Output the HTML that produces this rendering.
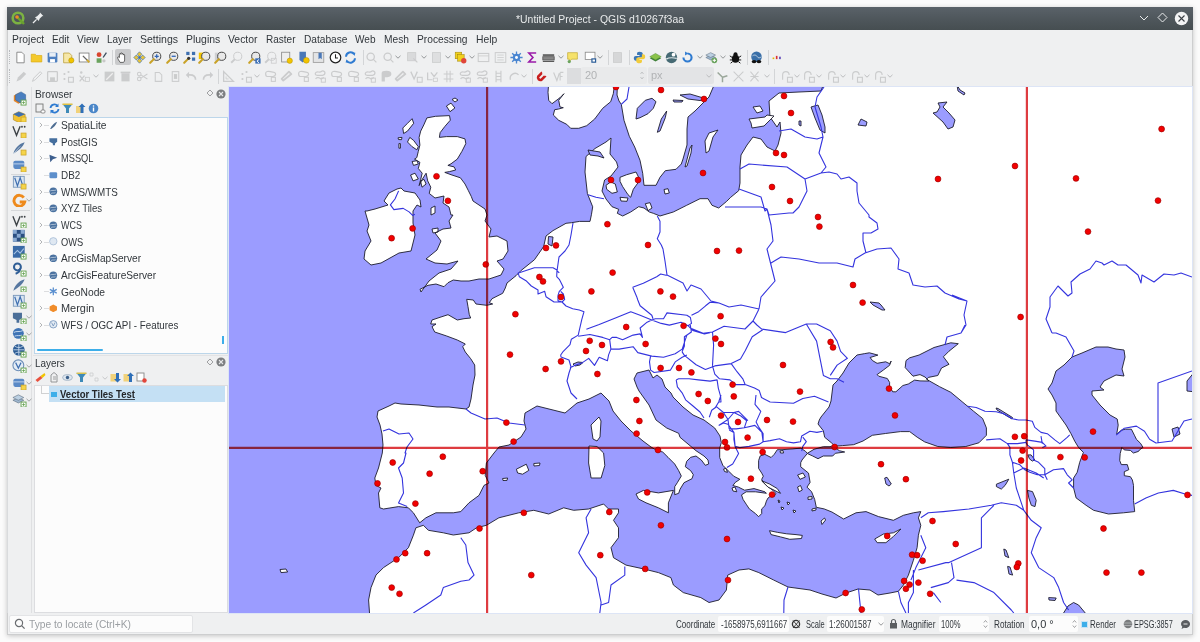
<!DOCTYPE html>
<html><head><meta charset="utf-8">
<style>
*{margin:0;padding:0;box-sizing:border-box}
html,body{width:1200px;height:642px;overflow:hidden;background:#fbfbfb;font-family:"Liberation Sans",sans-serif;color:#31363b}
.a{position:absolute}
.t{position:absolute;white-space:nowrap;line-height:1.15}
#win{position:absolute;left:7px;top:7px;width:1186px;height:627.5px;background:#eff0f1;border:1px solid #cdcecf;box-shadow:0 1px 5px rgba(0,0,0,.22)}
#title{position:absolute;left:7px;top:7px;width:1186px;height:22.5px;background:linear-gradient(#5a6269,#4f575c 50%,#464e51);color:#e9ebec;font-size:10.6px;text-align:center;line-height:22px}
.menu{position:absolute;top:32.5px;font-size:10.4px;color:#31363b;white-space:nowrap;line-height:1.15}
</style></head><body>
<div id="win"></div>
<div id="title"></div>
<svg class="a" style="left:11px;top:11px" width="15" height="15" viewBox="0 0 15 15"><circle cx="7" cy="7" r="5.3" fill="none" stroke="#7cb342" stroke-width="2.6"/><path d="M6 6l7 7" stroke="#6aa32e" stroke-width="2.4"/><circle cx="6" cy="6" r="1.8" fill="#f08a24"/></svg>
<svg class="a" style="left:32px;top:12px" width="12" height="12" viewBox="0 0 12 12"><path d="M1 11l3.6-3.6" stroke="#eceeef" stroke-width="1.3"/><path d="M3 5.2l3.8 3.8 0.8-2.2 2.8-2.8 0.6 0.2 0.3-0.3-3.3-3.3-0.3 0.3 0.2 0.6-2.8 2.8z" fill="#eceeef"/></svg>
<svg class="a" style="left:1139px;top:13px" width="10" height="10" viewBox="0 0 10 10"><path d="M1 3l4 4 4-4" fill="none" stroke="#e9ebec" stroke-width="1"/></svg>
<svg class="a" style="left:1157px;top:12px" width="11" height="11" viewBox="0 0 11 11"><path d="M5.5 1l4.5 4.5-4.5 4.5L1 5.5z" fill="none" stroke="#e9ebec" stroke-width="1"/></svg>
<svg class="a" style="left:1174px;top:11px" width="15" height="15" viewBox="0 0 15 15"><circle cx="7.5" cy="7.5" r="6.7" fill="#f2f3f4"/><path d="M4.5 4.5l6 6M10.5 4.5l-6 6" stroke="#3b4045" stroke-width="1.1"/></svg>
<div class="t" style="left:516.00px;top:14.98px;font-size:10.3px;line-height:1;color:#e9ebec;font-weight:normal;transform:scaleX(1.0120);transform-origin:0 0;">*Untitled Project - QGIS d10267f3aa</div>
<div class="t" style="left:11.50px;top:35.40px;font-size:10.4px;line-height:1;color:#31363b;font-weight:normal;transform:scaleX(0.9971);transform-origin:0 0;">Project</div>
<div class="t" style="left:51.75px;top:35.40px;font-size:10.4px;line-height:1;color:#31363b;font-weight:normal;transform:scaleX(0.9634);transform-origin:0 0;">Edit</div>
<div class="t" style="left:77.00px;top:35.40px;font-size:10.4px;line-height:1;color:#31363b;font-weight:normal;transform:scaleX(0.9846);transform-origin:0 0;">View</div>
<div class="t" style="left:107.00px;top:35.40px;font-size:10.4px;line-height:1;color:#31363b;font-weight:normal;transform:scaleX(0.9615);transform-origin:0 0;">Layer</div>
<div class="t" style="left:140.00px;top:35.40px;font-size:10.4px;line-height:1;color:#31363b;font-weight:normal;transform:scaleX(1.0121);transform-origin:0 0;">Settings</div>
<div class="t" style="left:185.75px;top:35.40px;font-size:10.4px;line-height:1;color:#31363b;font-weight:normal;transform:scaleX(1.0046);transform-origin:0 0;">Plugins</div>
<div class="t" style="left:228.00px;top:35.40px;font-size:10.4px;line-height:1;color:#31363b;font-weight:normal;transform:scaleX(1.0011);transform-origin:0 0;">Vector</div>
<div class="t" style="left:265.50px;top:35.40px;font-size:10.4px;line-height:1;color:#31363b;font-weight:normal;transform:scaleX(0.9638);transform-origin:0 0;">Raster</div>
<div class="t" style="left:303.50px;top:35.40px;font-size:10.4px;line-height:1;color:#31363b;font-weight:normal;transform:scaleX(0.9779);transform-origin:0 0;">Database</div>
<div class="t" style="left:355.00px;top:35.40px;font-size:10.4px;line-height:1;color:#31363b;font-weight:normal;transform:scaleX(0.9676);transform-origin:0 0;">Web</div>
<div class="t" style="left:383.75px;top:35.40px;font-size:10.4px;line-height:1;color:#31363b;font-weight:normal;transform:scaleX(0.9834);transform-origin:0 0;">Mesh</div>
<div class="t" style="left:417.00px;top:35.40px;font-size:10.4px;line-height:1;color:#31363b;font-weight:normal;transform:scaleX(0.9824);transform-origin:0 0;">Processing</div>
<div class="t" style="left:475.50px;top:35.40px;font-size:10.4px;line-height:1;color:#31363b;font-weight:normal;transform:scaleX(0.9942);transform-origin:0 0;">Help</div>
<div class="a" style="left:9px;top:50px;width:2px;height:14px;border-left:1px dotted #b9bbbe"></div>
<div class="a" style="left:9px;top:69px;width:2px;height:14px;border-left:1px dotted #b9bbbe"></div>
<svg class="a" style="left:13.5px;top:50.5px" width="13" height="13" viewBox="0 0 16 16"><path d="M3.5 1.5h6l3 3v10h-9z" fill="#fff" stroke="#777" stroke-width="1"/></svg>
<svg class="a" style="left:29.8px;top:50.5px" width="13" height="13" viewBox="0 0 16 16"><path d="M1.5 4h5l1.5 1.5h6.5v8h-13z" fill="#f4c92b" stroke="#d9a80f" stroke-width="0.8"/></svg>
<svg class="a" style="left:45.5px;top:50.5px" width="13" height="13" viewBox="0 0 16 16"><rect x="2" y="2" width="12" height="12" rx="1" fill="#4d7fc0"/><rect x="4" y="2.5" width="8" height="4.5" fill="#e8eef5"/><rect x="5" y="10" width="6" height="4" fill="#fff"/></svg>
<svg class="a" style="left:62.3px;top:50.5px" width="13" height="13" viewBox="0 0 16 16"><path d="M2 2.5h7l3 3v9H2z" fill="#f6e7a8" stroke="#b89a30" stroke-width="0.9"/><circle cx="11.5" cy="11.5" r="3.2" fill="#f2c400" stroke="#a88800" stroke-width="0.6"/></svg>
<svg class="a" style="left:78.2px;top:50.5px" width="13" height="13" viewBox="0 0 16 16"><rect x="1.5" y="2.5" width="12" height="11" fill="#fff" stroke="#777"/><path d="M6 6l6 6" stroke="#666" stroke-width="1.6"/><path d="M11 11l3 3" stroke="#d1a92a" stroke-width="2.2"/></svg>
<svg class="a" style="left:94.5px;top:50.5px" width="13" height="13" viewBox="0 0 16 16"><circle cx="5" cy="4.5" r="3" fill="#d9452f"/><rect x="2" y="9" width="6" height="5.5" fill="#6aa35e"/><path d="M10 8l4-6" stroke="#3a4b5c" stroke-width="1.6"/><circle cx="11" cy="12" r="2" fill="#c9c9c9"/></svg>
<div class="a" style="left:112px;top:50px;width:1px;height:15px;background:#d3d5d7"></div>
<div class="a" style="left:114.7px;top:49px;width:16px;height:15.5px;background:#c9cacc;border-radius:2px"></div>
<svg class="a" style="left:116px;top:50.5px" width="13" height="13" viewBox="0 0 16 16"><path d="M5 14c-1-2-3-4-3-6 0-1 1.5-1 2.2 0V4c0-1 1.6-1 1.6 0V3c0-1 1.6-1 1.6 0v1c0-1 1.6-1 1.6 0v1c0-1 1.6-1 1.6 0v6c0 2-1 3-2 3z" fill="#fff" stroke="#333" stroke-width="0.9"/></svg>
<svg class="a" style="left:132.5px;top:50.5px" width="13" height="13" viewBox="0 0 16 16"><path d="M8 1l3 3-3 3-3-3zM8 9l3 3-3 3-3-3zM4 5l3 3-3 3-3-3zM12 5l3 3-3 3-3-3z" fill="#e9c53a" stroke="#3d6fb0" stroke-width="0.8"/><rect x="6.5" y="6.5" width="3" height="3" fill="#3d6fb0"/></svg>
<svg class="a" style="left:149px;top:50.5px" width="13" height="13" viewBox="0 0 16 16"><circle cx="9.5" cy="6.5" r="5" fill="#e8e8e8" stroke="#444" stroke-width="1.2"/><path d="M6 10L1.5 14.5" stroke="#c9a227" stroke-width="2.6" stroke-linecap="round"/><path d="M7 6.5h5M9.5 4v5" stroke="#2f64b5" stroke-width="1.6"/></svg>
<svg class="a" style="left:165.5px;top:50.5px" width="13" height="13" viewBox="0 0 16 16"><circle cx="9.5" cy="6.5" r="5" fill="#e8e8e8" stroke="#444" stroke-width="1.2"/><path d="M6 10L1.5 14.5" stroke="#c9a227" stroke-width="2.6" stroke-linecap="round"/><path d="M7 6.5h5" stroke="#2f64b5" stroke-width="1.6"/></svg>
<svg class="a" style="left:182.5px;top:50.5px" width="13" height="13" viewBox="0 0 16 16"><rect x="4" y="1" width="4" height="4" fill="#3d6fb0"/><rect x="11" y="1" width="4" height="4" fill="#3d6fb0"/><rect x="11" y="8" width="4" height="4" fill="#3d6fb0"/><path d="M6 10L1.5 14.5" stroke="#c9a227" stroke-width="2.6" stroke-linecap="round"/><circle cx="7" cy="9" r="2" fill="#333"/></svg>
<svg class="a" style="left:197.5px;top:50.5px" width="13" height="13" viewBox="0 0 16 16"><rect x="1" y="2" width="7" height="8" fill="#f2c400"/><circle cx="9.5" cy="6.5" r="5" fill="#e8e8e8" stroke="#444" stroke-width="1.2"/><path d="M6 10L1.5 14.5" stroke="#c9a227" stroke-width="2.6" stroke-linecap="round"/></svg>
<svg class="a" style="left:214.3px;top:50.5px" width="13" height="13" viewBox="0 0 16 16"><rect x="1" y="2" width="6" height="10" fill="#cfd0d2"/><circle cx="9.5" cy="6.5" r="5" fill="#e8e8e8" stroke="#444" stroke-width="1.2"/><path d="M6 10L1.5 14.5" stroke="#c9a227" stroke-width="2.6" stroke-linecap="round"/></svg>
<svg class="a" style="left:230.2px;top:50.5px" width="13" height="13" viewBox="0 0 16 16"><circle cx="9.5" cy="6.5" r="5" fill="none" stroke="#cbcccd" stroke-width="1.2"/><path d="M6 10L1.5 14.5" stroke="#cbcccd" stroke-width="2.4"/></svg>
<svg class="a" style="left:247.5px;top:50.5px" width="13" height="13" viewBox="0 0 16 16"><circle cx="9.5" cy="6.5" r="5" fill="#e8e8e8" stroke="#444" stroke-width="1.2"/><path d="M6 10L1.5 14.5" stroke="#c9a227" stroke-width="2.6" stroke-linecap="round"/><rect x="9" y="9" width="6.5" height="6.5" fill="#3b6fb6"/><path d="M13.5 10.5l-2.5 2 2.5 2" stroke="#fff" fill="none" stroke-width="1.2"/></svg>
<svg class="a" style="left:263.5px;top:50.5px" width="13" height="13" viewBox="0 0 16 16"><circle cx="9.5" cy="6.5" r="5" fill="none" stroke="#cbcccd" stroke-width="1.2"/><path d="M6 10L1.5 14.5" stroke="#cbcccd" stroke-width="2.4"/><rect x="9" y="9" width="6" height="6" fill="none" stroke="#cbcccd"/></svg>
<svg class="a" style="left:280.2px;top:50.5px" width="13" height="13" viewBox="0 0 16 16"><rect x="2" y="1.5" width="10" height="12" fill="#eee" stroke="#888"/><circle cx="12" cy="12" r="3.3" fill="#f2c400" stroke="#b38f00" stroke-width="0.6"/></svg>
<svg class="a" style="left:296.8px;top:50.5px" width="13" height="13" viewBox="0 0 16 16"><path d="M3 1h8v10l-4 3-4-3z" fill="#4a78b8"/><circle cx="11.5" cy="11.5" r="3.6" fill="#f2c400" stroke="#b38f00" stroke-width="0.6"/></svg>
<svg class="a" style="left:311.8px;top:50.5px" width="13" height="13" viewBox="0 0 16 16"><rect x="1.5" y="2" width="13" height="12" fill="#e3e4e5" stroke="#999"/><path d="M8 2v8l2-1.5 2 1.5V2" fill="#4a78b8"/></svg>
<svg class="a" style="left:328.5px;top:50.5px" width="13" height="13" viewBox="0 0 16 16"><circle cx="8" cy="8" r="6.5" fill="#fff" stroke="#222" stroke-width="1.5"/><path d="M8 4v4.5h3" stroke="#222" stroke-width="1.3" fill="none"/></svg>
<svg class="a" style="left:344.3px;top:50.5px" width="13" height="13" viewBox="0 0 16 16"><path d="M2.5 7a5.5 5.5 0 0 1 10-3" stroke="#2f7bd1" stroke-width="2.4" fill="none"/><path d="M13.5 9a5.5 5.5 0 0 1-10 3" stroke="#2f7bd1" stroke-width="2.4" fill="none"/><path d="M10 1.5l4 0.5-1 4z" fill="#2f7bd1"/><path d="M6 14.5l-4-0.5 1-4z" fill="#2f7bd1"/></svg>
<div class="a" style="left:362.5px;top:50px;width:1px;height:15px;background:#d3d5d7"></div>
<svg class="a" style="left:365.2px;top:50.5px" width="13" height="13" viewBox="0 0 16 16"><circle cx="7" cy="7" r="4.5" fill="none" stroke="#cbcccd" stroke-width="1.6"/><path d="M10 10l4 4" stroke="#cbcccd" stroke-width="1.6"/></svg>
<svg class="a" style="left:381.8px;top:50.5px" width="13" height="13" viewBox="0 0 16 16"><circle cx="7" cy="7" r="4.5" fill="none" stroke="#cbcccd" stroke-width="1.6"/><path d="M10 10l4 4" stroke="#cbcccd" stroke-width="1.6"/></svg>
<svg class="a" style="left:395px;top:55px" width="6" height="4" viewBox="0 0 6 4"><path d="M0.5 0.8L3 3.2L5.5 0.8" fill="none" stroke="#8a8d90" stroke-width="0.9"/></svg>
<svg class="a" style="left:406px;top:50.5px" width="13" height="13" viewBox="0 0 16 16"><rect x="2" y="2" width="10" height="10" fill="#d9dadb" stroke="#cbcccd"/><path d="M9 9l5 5" stroke="#cbcccd" stroke-width="1.5"/></svg>
<svg class="a" style="left:421px;top:55px" width="6" height="4" viewBox="0 0 6 4"><path d="M0.5 0.8L3 3.2L5.5 0.8" fill="none" stroke="#8a8d90" stroke-width="0.9"/></svg>
<svg class="a" style="left:430.2px;top:50.5px" width="13" height="13" viewBox="0 0 16 16"><rect x="3" y="2" width="10" height="12" fill="#dedfe0" stroke="#cbcccd"/></svg>
<svg class="a" style="left:444.5px;top:55px" width="6" height="4" viewBox="0 0 6 4"><path d="M0.5 0.8L3 3.2L5.5 0.8" fill="none" stroke="#8a8d90" stroke-width="0.9"/></svg>
<svg class="a" style="left:453.5px;top:50.5px" width="13" height="13" viewBox="0 0 16 16"><rect x="1.5" y="1.5" width="8" height="8" fill="#f2d11c" stroke="#a48a10" stroke-width="0.7"/><rect x="4.5" y="4.5" width="8" height="8" fill="#f2d11c" stroke="#a48a10" stroke-width="0.7"/><circle cx="12" cy="12" r="3.3" fill="#e0463a"/></svg>
<svg class="a" style="left:468.7px;top:55px" width="6" height="4" viewBox="0 0 6 4"><path d="M0.5 0.8L3 3.2L5.5 0.8" fill="none" stroke="#8a8d90" stroke-width="0.9"/></svg>
<svg class="a" style="left:476.8px;top:50.5px" width="13" height="13" viewBox="0 0 16 16"><rect x="1.5" y="3" width="13" height="10" fill="none" stroke="#cbcccd" stroke-width="1.3"/><path d="M1.5 6h13" stroke="#cbcccd"/></svg>
<svg class="a" style="left:493.5px;top:50.5px" width="13" height="13" viewBox="0 0 16 16"><rect x="1.5" y="2" width="13" height="12" fill="none" stroke="#cbcccd" stroke-width="1.2"/><path d="M4 5h8M4 8h8M4 11h8" stroke="#cbcccd"/></svg>
<svg class="a" style="left:510.2px;top:50.5px" width="13" height="13" viewBox="0 0 16 16"><circle cx="8" cy="8" r="4.5" fill="#4a86d1"/><path d="M8 0.5v15M0.5 8h15M2.7 2.7l10.6 10.6M13.3 2.7L2.7 13.3" stroke="#4a86d1" stroke-width="1.6"/><circle cx="8" cy="8" r="1.8" fill="#fff"/></svg>
<svg class="a" style="left:526px;top:50.5px" width="13" height="13" viewBox="0 0 16 16"><path d="M12.5 2.5H3.5L8.5 8l-5 5.5h9" fill="none" stroke="#9a1aa8" stroke-width="2"/></svg>
<svg class="a" style="left:541.8px;top:50.5px" width="13" height="13" viewBox="0 0 16 16"><rect x="1" y="4" width="14" height="2" fill="#555"/><rect x="1" y="7" width="14" height="4" fill="#888" stroke="#555"/><rect x="1" y="12" width="14" height="1.5" fill="#555"/></svg>
<svg class="a" style="left:557.8px;top:55px" width="6" height="4" viewBox="0 0 6 4"><path d="M0.5 0.8L3 3.2L5.5 0.8" fill="none" stroke="#8a8d90" stroke-width="0.9"/></svg>
<svg class="a" style="left:566px;top:50.5px" width="13" height="13" viewBox="0 0 16 16"><path d="M2 2h12v8H7l-3 3v-3H2z" fill="#f6e26b" stroke="#c0a52c" stroke-width="0.8"/><circle cx="4" cy="13" r="2" fill="#6aa35e"/></svg>
<svg class="a" style="left:583.5px;top:50.5px" width="13" height="13" viewBox="0 0 16 16"><rect x="1.5" y="1.5" width="12" height="9" fill="#fff" stroke="#888"/><rect x="9" y="9" width="6" height="5.5" fill="#2d5f9a"/><rect x="10.5" y="10.5" width="3" height="2.5" fill="#fff"/></svg>
<svg class="a" style="left:597px;top:55px" width="6" height="4" viewBox="0 0 6 4"><path d="M0.5 0.8L3 3.2L5.5 0.8" fill="none" stroke="#8a8d90" stroke-width="0.9"/></svg>
<div class="a" style="left:607.5px;top:50px;width:1px;height:15px;background:#d3d5d7"></div>
<svg class="a" style="left:611px;top:50.5px" width="13" height="13" viewBox="0 0 16 16"><rect x="3" y="2" width="10" height="12" fill="#d6d7d8" stroke="#cbcccd"/></svg>
<div class="a" style="left:629px;top:50px;width:1px;height:15px;background:#d3d5d7"></div>
<svg class="a" style="left:632.5px;top:50.5px" width="13" height="13" viewBox="0 0 16 16"><path d="M8 1c-3 0-3 1.5-3 2.5V5h3v1H3.5C2 6 1 7 1 9s1 3 2.5 3H5v-2c0-1.2 1-2 2-2h3c1 0 2-1 2-2V3.5C12 2 10.5 1 8 1z" fill="#3b77b6"/><path d="M8 15c3 0 3-1.5 3-2.5V11H8v-1h4.5C14 10 15 9 15 7s-1-3-2.5-3H11v2c0 1.2-1 2-2 2H6c-1 0-2 1-2 2v2.5C4 14 5.5 15 8 15z" fill="#f2cc3d"/></svg>
<svg class="a" style="left:648.5px;top:50.5px" width="13" height="13" viewBox="0 0 16 16"><path d="M1 9l7 4 7-4-7-4z" fill="#3d7f3a"/><path d="M1 7l7 4 7-4-7-4z" fill="#8bc34a" stroke="#4d8b2d" stroke-width="0.6"/></svg>
<svg class="a" style="left:665.2px;top:50.5px" width="13" height="13" viewBox="0 0 16 16"><circle cx="8" cy="8" r="7" fill="#466a74"/><path d="M1.5 10c3-2 8-2 13-1" stroke="#dfe6e8" stroke-width="1.5" fill="none"/><circle cx="10.5" cy="4.5" r="2.3" fill="#fff"/></svg>
<svg class="a" style="left:681px;top:50.5px" width="13" height="13" viewBox="0 0 16 16"><path d="M3 8a5 5 0 1 0 5-5" fill="none" stroke="#2f7bd1" stroke-width="2.6"/><path d="M5 0.5l4 2.5-4 2.5z" fill="#2f7bd1"/></svg>
<svg class="a" style="left:696.6px;top:55px" width="6" height="4" viewBox="0 0 6 4"><path d="M0.5 0.8L3 3.2L5.5 0.8" fill="none" stroke="#8a8d90" stroke-width="0.9"/></svg>
<svg class="a" style="left:705.2px;top:50.5px" width="13" height="13" viewBox="0 0 16 16"><path d="M1 8l6 3 6-3-6-3z" fill="#9db6cf" stroke="#567" stroke-width="0.6"/><path d="M1 5l6 3 6-3-6-3z" fill="#bcd0e2" stroke="#567" stroke-width="0.6"/><circle cx="11.5" cy="11.5" r="3.5" fill="#6aa35e"/><path d="M9.5 11.5h4M11.5 9.5v4" stroke="#fff" stroke-width="1.2"/></svg>
<svg class="a" style="left:720.3px;top:55px" width="6" height="4" viewBox="0 0 6 4"><path d="M0.5 0.8L3 3.2L5.5 0.8" fill="none" stroke="#8a8d90" stroke-width="0.9"/></svg>
<svg class="a" style="left:728.5px;top:50.5px" width="13" height="13" viewBox="0 0 16 16"><ellipse cx="8" cy="9.5" rx="4.5" ry="5" fill="#111"/><circle cx="8" cy="4" r="2.5" fill="#111"/><path d="M1 6l3 2M15 6l-3 2M1 11h3M15 11h-3M2 15l2.5-2M14 15l-2.5-2" stroke="#111" stroke-width="1.2"/></svg>
<div class="a" style="left:746.7px;top:50px;width:1px;height:15px;background:#d3d5d7"></div>
<svg class="a" style="left:750.2px;top:50.5px" width="13" height="13" viewBox="0 0 16 16"><circle cx="8" cy="7" r="6.5" fill="#3a6fa8"/><path d="M3 6c2-2 5-1 6 1s3 2 5 0" stroke="#d0dde8" fill="none"/><ellipse cx="5" cy="13" rx="3" ry="2" fill="#111"/><ellipse cx="11" cy="13" rx="3" ry="2" fill="#111"/></svg>
<div class="a" style="left:768.3px;top:50px;width:1px;height:15px;background:#d3d5d7"></div>
<svg class="a" style="left:771px;top:50.5px" width="13" height="13" viewBox="0 0 16 16"><rect x="2" y="8" width="2" height="2" fill="#e2b400"/><rect x="6" y="6" width="2" height="4" fill="#d33"/><rect x="10" y="7" width="2" height="3" fill="#5a3fb5"/></svg>
<svg class="a" style="left:13.5px;top:69.5px" width="13" height="13" viewBox="0 0 16 16"><path d="M3 14l2-5 7-7 3 3-7 7z" fill="#cbcccd"/></svg>
<svg class="a" style="left:29.5px;top:69.5px" width="13" height="13" viewBox="0 0 16 16"><path d="M3 14l1.5-4 8-8 2 2-8 8z" fill="none" stroke="#cbcccd" stroke-width="1.2"/></svg>
<svg class="a" style="left:45.5px;top:69.5px" width="13" height="13" viewBox="0 0 16 16"><rect x="2" y="2" width="12" height="12" rx="1" fill="none" stroke="#cbcccd" stroke-width="1.6"/><rect x="5" y="9" width="6" height="5" fill="#cbcccd"/></svg>
<svg class="a" style="left:62.3px;top:69.5px" width="13" height="13" viewBox="0 0 16 16"><circle cx="3" cy="5" r="1.3" fill="#cbcccd"/><circle cx="8" cy="2.5" r="1.3" fill="#cbcccd"/><circle cx="3" cy="11" r="1.3" fill="#cbcccd"/><rect x="8" y="9" width="6" height="6" fill="none" stroke="#cbcccd" stroke-width="1.4"/></svg>
<svg class="a" style="left:78.2px;top:69.5px" width="13" height="13" viewBox="0 0 16 16"><circle cx="4" cy="3" r="1.5" fill="#cbcccd"/><path d="M2 7l6 7M8 7l-6 7" stroke="#cbcccd" stroke-width="1.6"/><rect x="9" y="9" width="5" height="5" fill="none" stroke="#cbcccd"/></svg>
<svg class="a" style="left:93px;top:74px" width="6" height="4" viewBox="0 0 6 4"><path d="M0.5 0.8L3 3.2L5.5 0.8" fill="none" stroke="#b5b7b9" stroke-width="0.9"/></svg>
<svg class="a" style="left:102.5px;top:69.5px" width="13" height="13" viewBox="0 0 16 16"><rect x="2" y="2" width="12" height="12" fill="#cbcccd"/><path d="M4 12l8-8" stroke="#eee" stroke-width="1.5"/></svg>
<svg class="a" style="left:118.5px;top:69.5px" width="13" height="13" viewBox="0 0 16 16"><rect x="3" y="4" width="10" height="10" fill="#cbcccd"/><rect x="2" y="2" width="12" height="2" fill="#cbcccd"/></svg>
<svg class="a" style="left:135.5px;top:69.5px" width="13" height="13" viewBox="0 0 16 16"><circle cx="4" cy="5" r="2.2" fill="none" stroke="#cbcccd" stroke-width="1.3"/><circle cx="4" cy="11" r="2.2" fill="none" stroke="#cbcccd" stroke-width="1.3"/><path d="M6 6l8 5M6 10l8-5" stroke="#cbcccd" stroke-width="1.3"/></svg>
<svg class="a" style="left:151.5px;top:69.5px" width="13" height="13" viewBox="0 0 16 16"><path d="M4 3h5l3 3v8H4z" fill="none" stroke="#cbcccd" stroke-width="1.3"/></svg>
<svg class="a" style="left:168.5px;top:69.5px" width="13" height="13" viewBox="0 0 16 16"><rect x="4" y="2" width="8" height="12" fill="none" stroke="#cbcccd" stroke-width="1.3"/><rect x="6" y="5" width="4" height="6" fill="#cbcccd"/></svg>
<svg class="a" style="left:184.5px;top:69.5px" width="13" height="13" viewBox="0 0 16 16"><path d="M13 12c0-4-3-6-7-6H3" fill="none" stroke="#cbcccd" stroke-width="2"/><path d="M5 2L1 6l4 4z" fill="#cbcccd"/></svg>
<svg class="a" style="left:200.5px;top:69.5px" width="13" height="13" viewBox="0 0 16 16"><path d="M3 12c0-4 3-6 7-6h3" fill="none" stroke="#cbcccd" stroke-width="2"/><path d="M11 2l4 4-4 4z" fill="#cbcccd"/></svg>
<div class="a" style="left:217.5px;top:69px;width:1px;height:15px;background:#d3d5d7"></div>
<svg class="a" style="left:221.5px;top:69.5px" width="13" height="13" viewBox="0 0 16 16"><path d="M2 2v12h12z" fill="none" stroke="#cbcccd" stroke-width="1.6"/><path d="M5 8v3h3" fill="none" stroke="#cbcccd"/></svg>
<svg class="a" style="left:239.5px;top:69.5px" width="13" height="13" viewBox="0 0 16 16"><circle cx="3" cy="5" r="1.3" fill="#cbcccd"/><circle cx="8" cy="2.5" r="1.3" fill="#cbcccd"/><circle cx="3" cy="11" r="1.3" fill="#cbcccd"/><rect x="8" y="9" width="6" height="6" fill="none" stroke="#cbcccd" stroke-width="1.4"/></svg>
<svg class="a" style="left:254px;top:74px" width="6" height="4" viewBox="0 0 6 4"><path d="M0.5 0.8L3 3.2L5.5 0.8" fill="none" stroke="#b5b7b9" stroke-width="0.9"/></svg>
<svg class="a" style="left:263.5px;top:69.5px" width="13" height="13" viewBox="0 0 16 16"><path d="M2 4c0-2 3-3 6-2s5 0 6 2-1 4-3 4H4C2 8 2 6 2 4z" fill="none" stroke="#cbcccd" stroke-width="1.5"/><rect x="9" y="9" width="5" height="5" fill="none" stroke="#cbcccd" stroke-width="1.3"/></svg>
<svg class="a" style="left:280.2px;top:69.5px" width="13" height="13" viewBox="0 0 16 16"><path d="M4 13l-2-2 9-9 3 3z" fill="none" stroke="#cbcccd" stroke-width="2.2" stroke-linejoin="round"/></svg>
<svg class="a" style="left:296.5px;top:69.5px" width="13" height="13" viewBox="0 0 16 16"><path d="M2 4c0-2 3-3 6-2s5 0 6 2-1 4-3 4H4C2 8 2 6 2 4z" fill="none" stroke="#cbcccd" stroke-width="1.5"/><rect x="9" y="9" width="5" height="5" fill="none" stroke="#cbcccd" stroke-width="1.3"/></svg>
<svg class="a" style="left:313.5px;top:69.5px" width="13" height="13" viewBox="0 0 16 16"><path d="M1.5 5c0-2 2-3 4-2.5s3 0 4-1 4 0 4 2-1 3-3 3H4c-2 0-2.5-1-2.5-1.5z" fill="none" stroke="#cbcccd" stroke-width="1.5"/><path d="M2 11c1-2 4-2 5-1s3 1 5-1" fill="none" stroke="#cbcccd" stroke-width="1.5"/><rect x="9" y="10" width="5" height="5" fill="none" stroke="#cbcccd" stroke-width="1.2"/></svg>
<svg class="a" style="left:330.2px;top:69.5px" width="13" height="13" viewBox="0 0 16 16"><path d="M2 4c0-2 3-3 6-2s5 0 6 2-1 4-3 4H4C2 8 2 6 2 4z" fill="none" stroke="#cbcccd" stroke-width="1.5"/><rect x="9" y="9" width="5" height="5" fill="none" stroke="#cbcccd" stroke-width="1.3"/></svg>
<svg class="a" style="left:346.5px;top:69.5px" width="13" height="13" viewBox="0 0 16 16"><path d="M2 4c0-2 3-3 6-2s5 0 6 2-1 4-3 4H4C2 8 2 6 2 4z" fill="none" stroke="#cbcccd" stroke-width="1.5"/><rect x="9" y="9" width="5" height="5" fill="none" stroke="#cbcccd" stroke-width="1.3"/></svg>
<svg class="a" style="left:363.5px;top:69.5px" width="13" height="13" viewBox="0 0 16 16"><path d="M1.5 5c0-2 2-3 4-2.5s3 0 4-1 4 0 4 2-1 3-3 3H4c-2 0-2.5-1-2.5-1.5z" fill="none" stroke="#cbcccd" stroke-width="1.5"/><path d="M2 11c1-2 4-2 5-1s3 1 5-1" fill="none" stroke="#cbcccd" stroke-width="1.5"/><rect x="9" y="10" width="5" height="5" fill="none" stroke="#cbcccd" stroke-width="1.2"/></svg>
<svg class="a" style="left:380.2px;top:69.5px" width="13" height="13" viewBox="0 0 16 16"><path d="M2 14V4c0-2 2-3 6-3s6 1 6 4-3 4-6 4H6v5z" fill="#cbcccd"/></svg>
<svg class="a" style="left:393.5px;top:69.5px" width="13" height="13" viewBox="0 0 16 16"><path d="M4 13l-2-2 9-9 3 3z" fill="none" stroke="#cbcccd" stroke-width="2.2" stroke-linejoin="round"/></svg>
<svg class="a" style="left:410.2px;top:69.5px" width="13" height="13" viewBox="0 0 16 16"><path d="M1 2l4 9 4-9" fill="none" stroke="#cbcccd" stroke-width="1.6"/><rect x="9" y="9" width="6" height="6" fill="none" stroke="#cbcccd" stroke-width="1.3"/></svg>
<svg class="a" style="left:426px;top:69.5px" width="13" height="13" viewBox="0 0 16 16"><path d="M2 3v9h6M6 3l4 5M14 3l-4 5" fill="none" stroke="#cbcccd" stroke-width="1.5"/><rect x="9" y="10" width="5" height="4" fill="none" stroke="#cbcccd"/></svg>
<svg class="a" style="left:441.5px;top:69.5px" width="13" height="13" viewBox="0 0 16 16"><path d="M6 1v14M10 1v14M2 5h12M2 11h12" stroke="#cbcccd" stroke-width="1.3"/></svg>
<svg class="a" style="left:458.5px;top:69.5px" width="13" height="13" viewBox="0 0 16 16"><path d="M1.5 5c0-2 2-3 4-2.5s3 0 4-1 4 0 4 2-1 3-3 3H4c-2 0-2.5-1-2.5-1.5z" fill="none" stroke="#cbcccd" stroke-width="1.5"/><path d="M2 11c1-2 4-2 5-1s3 1 5-1" fill="none" stroke="#cbcccd" stroke-width="1.5"/><rect x="9" y="10" width="5" height="5" fill="none" stroke="#cbcccd" stroke-width="1.2"/></svg>
<svg class="a" style="left:475.5px;top:69.5px" width="13" height="13" viewBox="0 0 16 16"><path d="M1.5 5c0-2 2-3 4-2.5s3 0 4-1 4 0 4 2-1 3-3 3H4c-2 0-2.5-1-2.5-1.5z" fill="none" stroke="#cbcccd" stroke-width="1.5"/><path d="M2 11c1-2 4-2 5-1s3 1 5-1" fill="none" stroke="#cbcccd" stroke-width="1.5"/><rect x="9" y="10" width="5" height="5" fill="none" stroke="#cbcccd" stroke-width="1.2"/></svg>
<svg class="a" style="left:491.5px;top:69.5px" width="13" height="13" viewBox="0 0 16 16"><path d="M5 1v14M11 1v14M5 4h6M5 8h6M5 12h6" stroke="#cbcccd" stroke-width="1.4"/></svg>
<svg class="a" style="left:507.5px;top:69.5px" width="13" height="13" viewBox="0 0 16 16"><path d="M3 12a6 6 0 0 1 10-6" fill="none" stroke="#cbcccd" stroke-width="1.6"/></svg>
<svg class="a" style="left:521px;top:74px" width="6" height="4" viewBox="0 0 6 4"><path d="M0.5 0.8L3 3.2L5.5 0.8" fill="none" stroke="#b5b7b9" stroke-width="0.9"/></svg>
<div class="a" style="left:531.6px;top:69px;width:1px;height:15px;background:#d3d5d7"></div>
<svg class="a" style="left:534.5px;top:69.5px" width="13" height="13" viewBox="0 0 16 16"><path d="M5 3a5 5 0 0 0 0 10h0" fill="none"/><path d="M9 3L4 8a3 3 0 0 0 4 4l5-5" fill="none" stroke="#c81e1e" stroke-width="3.2"/><path d="M9 3l4 4" stroke="#eee" stroke-width="2"/></svg>
<svg class="a" style="left:551.5px;top:69.5px" width="13" height="13" viewBox="0 0 16 16"><path d="M2 3l4 10 3-9M10 3v10M10 3h4M10 8h3" fill="none" stroke="#cbcccd" stroke-width="1.4"/></svg>
<div class="a" style="left:567px;top:68px;width:14px;height:16px;background:#dcdddf"></div>
<div class="a" style="left:581px;top:67px;width:66px;height:17px;background:#e9eaeb;border-radius:2px"></div>
<div class="t" style="left:585px;top:69px;font-size:11px;color:#b1b3b5">20</div>
<svg class="a" style="left:640px;top:71px" width="4" height="9" viewBox="0 0 4 9"><path d="M0.5 3L2 1 3.5 3M0.5 6L2 8 3.5 6" fill="none" stroke="#b9bbbd" stroke-width="0.8"/></svg>
<div class="a" style="left:648px;top:67px;width:66px;height:17px;background:#e3e4e6;border-radius:2px"></div>
<div class="t" style="left:651px;top:69px;font-size:11px;color:#b1b3b5">px</div>
<svg class="a" style="left:706px;top:74px" width="6" height="4" viewBox="0 0 6 4"><path d="M0.5 0.8L3 3.2L5.5 0.8" fill="none" stroke="#b5b7b9" stroke-width="0.9"/></svg>
<svg class="a" style="left:715.5px;top:69.5px" width="13" height="13" viewBox="0 0 16 16"><path d="M8 9L2 3M8 9l6-2M8 9v6" stroke="#9aa79a" stroke-width="1.8"/></svg>
<svg class="a" style="left:731.5px;top:69.5px" width="13" height="13" viewBox="0 0 16 16"><path d="M2 2l12 12M14 2L2 14" stroke="#cbcccd" stroke-width="1.3"/></svg>
<svg class="a" style="left:747.5px;top:69.5px" width="13" height="13" viewBox="0 0 16 16"><path d="M3 2l5 6-5 6M13 2L8 8l5 6M3 8h10" fill="none" stroke="#cbcccd" stroke-width="1.3"/></svg>
<svg class="a" style="left:764px;top:74px" width="6" height="4" viewBox="0 0 6 4"><path d="M0.5 0.8L3 3.2L5.5 0.8" fill="none" stroke="#b5b7b9" stroke-width="0.9"/></svg>
<div class="a" style="left:774px;top:69px;width:1px;height:15px;background:#d3d5d7"></div>
<svg class="a" style="left:780.5px;top:69.5px" width="13" height="13" viewBox="0 0 16 16"><path d="M2 12V6a4 4 0 0 1 8 0" fill="none" stroke="#cbcccd" stroke-width="1.4"/><rect x="8" y="9" width="6" height="6" fill="none" stroke="#cbcccd" stroke-width="1.4"/></svg>
<svg class="a" style="left:794px;top:74px" width="6" height="4" viewBox="0 0 6 4"><path d="M0.5 0.8L3 3.2L5.5 0.8" fill="none" stroke="#b5b7b9" stroke-width="0.9"/></svg>
<svg class="a" style="left:802.5px;top:69.5px" width="13" height="13" viewBox="0 0 16 16"><path d="M2 12V6a4 4 0 0 1 8 0" fill="none" stroke="#cbcccd" stroke-width="1.4"/><rect x="8" y="9" width="6" height="6" fill="none" stroke="#cbcccd" stroke-width="1.4"/></svg>
<svg class="a" style="left:816px;top:74px" width="6" height="4" viewBox="0 0 6 4"><path d="M0.5 0.8L3 3.2L5.5 0.8" fill="none" stroke="#b5b7b9" stroke-width="0.9"/></svg>
<svg class="a" style="left:826.5px;top:69.5px" width="13" height="13" viewBox="0 0 16 16"><path d="M2 12V6a4 4 0 0 1 8 0" fill="none" stroke="#cbcccd" stroke-width="1.4"/><rect x="8" y="9" width="6" height="6" fill="none" stroke="#cbcccd" stroke-width="1.4"/></svg>
<svg class="a" style="left:840px;top:74px" width="6" height="4" viewBox="0 0 6 4"><path d="M0.5 0.8L3 3.2L5.5 0.8" fill="none" stroke="#b5b7b9" stroke-width="0.9"/></svg>
<svg class="a" style="left:850.5px;top:69.5px" width="13" height="13" viewBox="0 0 16 16"><path d="M2 12V6a4 4 0 0 1 8 0" fill="none" stroke="#cbcccd" stroke-width="1.4"/><rect x="8" y="9" width="6" height="6" fill="none" stroke="#cbcccd" stroke-width="1.4"/></svg>
<svg class="a" style="left:864px;top:74px" width="6" height="4" viewBox="0 0 6 4"><path d="M0.5 0.8L3 3.2L5.5 0.8" fill="none" stroke="#b5b7b9" stroke-width="0.9"/></svg>
<svg class="a" style="left:873.5px;top:69.5px" width="13" height="13" viewBox="0 0 16 16"><path d="M2 12V6a4 4 0 0 1 8 0" fill="none" stroke="#cbcccd" stroke-width="1.4"/><rect x="8" y="9" width="6" height="6" fill="none" stroke="#cbcccd" stroke-width="1.4"/></svg>
<svg class="a" style="left:887px;top:74px" width="6" height="4" viewBox="0 0 6 4"><path d="M0.5 0.8L3 3.2L5.5 0.8" fill="none" stroke="#b5b7b9" stroke-width="0.9"/></svg>
<div class="a" style="left:7px;top:86px;width:1px;height:527px;background:#d9dbdd"></div>
<div class="a" style="left:31px;top:87px;width:1px;height:526px;background:#dfe0e2"></div>
<svg class="a" style="left:12.25px;top:91.45px" width="14.5" height="14.5" viewBox="0 0 16 16"><path d="M2 5l6-3 5 3v6l-6 3-5-3z" fill="#e6862a"/><path d="M4 4l6-3 5 3v6l-6 3-5-3z" fill="#4a7fc0" stroke="#2f5f95" stroke-width="0.6"/><rect x="10" y="10" width="5.5" height="5.5" fill="#fff" stroke="#5f9f4a" stroke-width="1"/><path d="M12.75 11.3v3M11.25 12.75h3" stroke="#5f9f4a" stroke-width="0.9"/></svg>
<svg class="a" style="left:12.25px;top:107.75px" width="14.5" height="14.5" viewBox="0 0 16 16"><path d="M1.5 7l6-3 7 3v6l-7 3-6-3z" fill="#f2c230" stroke="#a07a10" stroke-width="0.6"/><path d="M1.5 7l6-3 7 3-7 3z" fill="#3f6fb0"/><rect x="10" y="10" width="5.5" height="5.5" fill="#f5d44a" stroke="#c9a227" stroke-width="0.8"/></svg>
<svg class="a" style="left:12.25px;top:123.75px" width="14.5" height="14.5" viewBox="0 0 16 16"><path d="M1 2.5l4 10 4-10" fill="none" stroke="#3d4246" stroke-width="1.5"/><circle cx="11" cy="3" r="1" fill="#3d4246"/><circle cx="14" cy="3" r="1" fill="#3d4246"/><rect x="10" y="10" width="5.5" height="5.5" fill="#f5d44a" stroke="#c9a227" stroke-width="0.8"/></svg>
<svg class="a" style="left:12.25px;top:141.45px" width="14.5" height="14.5" viewBox="0 0 16 16"><path d="M1.5 14C3 8 8 3 14 1.5 12 7 7 11 1.5 14z" fill="#5677a0"/><path d="M1.5 14L9 6" stroke="#dfe6ee" stroke-width="0.7"/><rect x="10" y="10" width="5.5" height="5.5" fill="#f5d44a" stroke="#c9a227" stroke-width="0.8"/></svg>
<svg class="a" style="left:12.25px;top:157.75px" width="14.5" height="14.5" viewBox="0 0 16 16"><rect x="1.5" y="3" width="12" height="9" rx="2" fill="#5b8ac6"/><path d="M1.5 6.5h12" stroke="#c9daf0" stroke-width="1"/><rect x="10" y="10" width="5.5" height="5.5" fill="#f5d44a" stroke="#c9a227" stroke-width="0.8"/></svg>
<svg class="a" style="left:12.25px;top:175.25px" width="14.5" height="14.5" viewBox="0 0 16 16"><rect x="1.5" y="1.5" width="12" height="12" fill="#dbe6f2" stroke="#7a98bb" stroke-width="1"/><path d="M3 3l3 9 3-9 3 9" fill="none" stroke="#3f6fb0" stroke-width="1.3"/><rect x="10" y="10" width="5.5" height="5.5" fill="#f5d44a" stroke="#c9a227" stroke-width="0.8"/></svg>
<svg class="a" style="left:12.25px;top:192.75px" width="14.5" height="14.5" viewBox="0 0 16 16"><path d="M13 5a6 6 0 1 0 1 5H8.5" fill="none" stroke="#ee8a1c" stroke-width="3.2"/></svg>
<svg class="a" style="left:12.25px;top:213.75px" width="14.5" height="14.5" viewBox="0 0 16 16"><path d="M1 2.5l4 10 4-10" fill="none" stroke="#3d4246" stroke-width="1.5"/><circle cx="11" cy="3" r="1" fill="#3d4246"/><circle cx="14" cy="3" r="1" fill="#3d4246"/><rect x="10" y="10" width="5.5" height="5.5" fill="#fff" stroke="#5f9f4a" stroke-width="1"/><path d="M12.75 11.3v3M11.25 12.75h3" stroke="#5f9f4a" stroke-width="0.9"/></svg>
<svg class="a" style="left:12.25px;top:228.75px" width="14.5" height="14.5" viewBox="0 0 16 16"><rect x="1" y="1" width="13" height="13" fill="#2b4f82"/><rect x="1" y="1" width="4.3" height="4.3" fill="#89a9d2"/><rect x="9.6" y="1" width="4.3" height="4.3" fill="#89a9d2"/><rect x="5.3" y="5.3" width="4.3" height="4.3" fill="#89a9d2"/><rect x="1" y="9.6" width="4.3" height="4.3" fill="#89a9d2"/><rect x="10" y="10" width="5.5" height="5.5" fill="#fff" stroke="#5f9f4a" stroke-width="1"/><path d="M12.75 11.3v3M11.25 12.75h3" stroke="#5f9f4a" stroke-width="0.9"/></svg>
<svg class="a" style="left:12.25px;top:245.35px" width="14.5" height="14.5" viewBox="0 0 16 16"><rect x="1" y="1" width="13" height="13" fill="#3a6aa6"/><path d="M2 10l4-4 3 3 4-5" stroke="#a8c4e6" stroke-width="1.2" fill="none"/><rect x="10" y="10" width="5.5" height="5.5" fill="#fff" stroke="#5f9f4a" stroke-width="1"/><path d="M12.75 11.3v3M11.25 12.75h3" stroke="#5f9f4a" stroke-width="0.9"/></svg>
<svg class="a" style="left:12.25px;top:262.15px" width="14.5" height="14.5" viewBox="0 0 16 16"><circle cx="6" cy="5.5" r="3.8" fill="none" stroke="#2e5d95" stroke-width="2.2"/><path d="M9 7c0 3-2 5-5 6" stroke="#2e5d95" stroke-width="2.2" fill="none"/><rect x="10" y="10" width="5.5" height="5.5" fill="#fff" stroke="#5f9f4a" stroke-width="1"/><path d="M12.75 11.3v3M11.25 12.75h3" stroke="#5f9f4a" stroke-width="0.9"/></svg>
<svg class="a" style="left:12.25px;top:277.65px" width="14.5" height="14.5" viewBox="0 0 16 16"><path d="M1.5 14C3 8 8 3 14 1.5 12 7 7 11 1.5 14z" fill="#5677a0"/><rect x="10" y="10" width="5.5" height="5.5" fill="#fff" stroke="#5f9f4a" stroke-width="1"/><path d="M12.75 11.3v3M11.25 12.75h3" stroke="#5f9f4a" stroke-width="0.9"/></svg>
<svg class="a" style="left:12.25px;top:294.45px" width="14.5" height="14.5" viewBox="0 0 16 16"><rect x="1.5" y="1.5" width="12" height="12" fill="#dbe6f2" stroke="#7a98bb" stroke-width="1"/><path d="M3 3l3 9 3-9 3 9" fill="none" stroke="#3f6fb0" stroke-width="1.3"/><rect x="10" y="10" width="5.5" height="5.5" fill="#fff" stroke="#5f9f4a" stroke-width="1"/><path d="M12.75 11.3v3M11.25 12.75h3" stroke="#5f9f4a" stroke-width="0.9"/></svg>
<svg class="a" style="left:12.25px;top:309.75px" width="14.5" height="14.5" viewBox="0 0 16 16"><path d="M1 3h10v6l-3 2v3H5v-3L1 9z" fill="#4a6e98"/><rect x="10" y="10" width="5.5" height="5.5" fill="#fff" stroke="#5f9f4a" stroke-width="1"/><path d="M12.75 11.3v3M11.25 12.75h3" stroke="#5f9f4a" stroke-width="0.9"/></svg>
<svg class="a" style="left:12.25px;top:326.75px" width="14.5" height="14.5" viewBox="0 0 16 16"><circle cx="7" cy="7" r="6" fill="#3f74b5"/><path d="M2 6c3-2 6 0 10-2M3 10c3-1 5 0 8-1" stroke="#cfe0f2" stroke-width="1" fill="none"/><rect x="10" y="10" width="5.5" height="5.5" fill="#fff" stroke="#5f9f4a" stroke-width="1"/><path d="M12.75 11.3v3M11.25 12.75h3" stroke="#5f9f4a" stroke-width="0.9"/></svg>
<svg class="a" style="left:12.25px;top:343.45px" width="14.5" height="14.5" viewBox="0 0 16 16"><circle cx="7.5" cy="7.5" r="6.5" fill="#2e5d95"/><path d="M1.5 7.5h12M7.5 1v13M3 3.5c3 2 6 2 9 0M3 11.5c3-2 6-2 9 0" stroke="#cfe0f2" stroke-width="0.9" fill="none"/><rect x="10" y="10" width="5.5" height="5.5" fill="#fff" stroke="#5f9f4a" stroke-width="1"/><path d="M12.75 11.3v3M11.25 12.75h3" stroke="#5f9f4a" stroke-width="0.9"/></svg>
<svg class="a" style="left:12.25px;top:358.75px" width="14.5" height="14.5" viewBox="0 0 16 16"><circle cx="7" cy="7" r="6" fill="#e4ecf5" stroke="#6d8fb8" stroke-width="1.2"/><path d="M4 4l3 6 3-6" fill="none" stroke="#3f6fb0" stroke-width="1.3"/><rect x="10" y="10" width="5.5" height="5.5" fill="#fff" stroke="#5f9f4a" stroke-width="1"/><path d="M12.75 11.3v3M11.25 12.75h3" stroke="#5f9f4a" stroke-width="0.9"/></svg>
<svg class="a" style="left:12.25px;top:375.75px" width="14.5" height="14.5" viewBox="0 0 16 16"><rect x="1.5" y="3" width="12" height="9" rx="2" fill="#5b8ac6"/><path d="M1.5 6.5h12" stroke="#c9daf0" stroke-width="1"/><rect x="10" y="10" width="5.5" height="5.5" fill="#f5d44a" stroke="#c9a227" stroke-width="0.8"/></svg>
<svg class="a" style="left:12.25px;top:392.75px" width="14.5" height="14.5" viewBox="0 0 16 16"><path d="M1 8l6 3 6-3-6-3z" fill="#9db6cf" stroke="#567" stroke-width="0.6"/><path d="M1 5l6 3 6-3-6-3z" fill="#bcd0e2" stroke="#567" stroke-width="0.6"/><rect x="10" y="10" width="5.5" height="5.5" fill="#fff" stroke="#5f9f4a" stroke-width="1"/><path d="M12.75 11.3v3M11.25 12.75h3" stroke="#5f9f4a" stroke-width="0.9"/></svg>
<svg class="a" style="left:26px;top:198px" width="6" height="4" viewBox="0 0 6 4"><path d="M0.5 0.8L3 3.2L5.5 0.8" fill="none" stroke="#9a9c9e" stroke-width="0.9"/></svg>
<svg class="a" style="left:26px;top:315px" width="6" height="4" viewBox="0 0 6 4"><path d="M0.5 0.8L3 3.2L5.5 0.8" fill="none" stroke="#9a9c9e" stroke-width="0.9"/></svg>
<svg class="a" style="left:26px;top:332px" width="6" height="4" viewBox="0 0 6 4"><path d="M0.5 0.8L3 3.2L5.5 0.8" fill="none" stroke="#9a9c9e" stroke-width="0.9"/></svg>
<svg class="a" style="left:26px;top:364px" width="6" height="4" viewBox="0 0 6 4"><path d="M0.5 0.8L3 3.2L5.5 0.8" fill="none" stroke="#9a9c9e" stroke-width="0.9"/></svg>
<svg class="a" style="left:26px;top:381px" width="6" height="4" viewBox="0 0 6 4"><path d="M0.5 0.8L3 3.2L5.5 0.8" fill="none" stroke="#9a9c9e" stroke-width="0.9"/></svg>
<svg class="a" style="left:26px;top:398px" width="6" height="4" viewBox="0 0 6 4"><path d="M0.5 0.8L3 3.2L5.5 0.8" fill="none" stroke="#9a9c9e" stroke-width="0.9"/></svg>
<div class="a" style="left:11px;top:173.5px;width:19px;height:1px;background:#d6d8da"></div>
<div class="a" style="left:11px;top:210px;width:19px;height:1px;background:#d6d8da"></div>
<div class="t" style="left:35.40px;top:90.18px;font-size:10.3px;line-height:1;color:#31363b;font-weight:normal;transform:scaleX(0.9930);transform-origin:0 0;">Browser</div>
<svg class="a" style="left:206px;top:89px" width="8" height="8" viewBox="0 0 8 8"><path d="M4 1L7 4 4 7 1 4z" fill="none" stroke="#8a8c8e" stroke-width="0.8"/></svg>
<svg class="a" style="left:216px;top:89px" width="10" height="10" viewBox="0 0 10 10"><circle cx="5" cy="5" r="4.6" fill="#7d7f81"/><path d="M3 3l4 4M7 3L3 7" stroke="#e6e7e8" stroke-width="1.1"/></svg>
<svg class="a" style="left:34.9px;top:103.2px" width="11" height="11" viewBox="0 0 11 11"><rect x="1" y="1" width="7" height="8" fill="none" stroke="#777" stroke-width="0.9"/><rect x="6" y="7" width="4" height="3" rx="1" fill="#fff" stroke="#777" stroke-width="0.8"/></svg>
<svg class="a" style="left:48.7px;top:103.2px" width="11" height="11" viewBox="0 0 11 11"><path d="M1.5 5a4 4 0 0 1 7-2.2M9.5 6a4 4 0 0 1-7 2.2" fill="none" stroke="#2f7bd1" stroke-width="1.8"/><path d="M9.5 0.5v3.5H6z M1.5 10.5V7H5z" fill="#2f7bd1"/></svg>
<svg class="a" style="left:61.5px;top:103.2px" width="11" height="11" viewBox="0 0 11 11"><path d="M0.5 1h10L7 5.5V10H4V5.5z" fill="#3d8ab8"/><rect x="0.5" y="0.5" width="10" height="1.5" fill="#e0c040"/></svg>
<svg class="a" style="left:75.3px;top:103.2px" width="11" height="11" viewBox="0 0 11 11"><rect x="1" y="3" width="6" height="7" fill="#f1d27a"/><path d="M7 0.5l3.5 3.5H8.5v6h-3V4H3.5z" fill="#2f6fb8"/></svg>
<svg class="a" style="left:88.2px;top:103.2px" width="11" height="11" viewBox="0 0 11 11"><circle cx="5.5" cy="5.5" r="4.8" fill="#4a86c8"/><rect x="4.8" y="4.5" width="1.4" height="4" fill="#fff"/><circle cx="5.5" cy="3" r="0.8" fill="#fff"/></svg>
<div class="a" style="left:33.5px;top:116.5px;width:194px;height:237.5px;background:#fcfcfc;border:1px solid #bcd6ea"></div>
<svg class="a" style="left:39px;top:122.15px" width="4" height="6" viewBox="0 0 4 6"><path d="M0.8 0.8L3 3 0.8 5.2" fill="none" stroke="#a0a2a4" stroke-width="0.8"/></svg>
<div class="a" style="left:43.7px;top:125.15px;width:5px;height:1px;background:#dcdddf"></div>
<svg class="a" style="left:49.2px;top:120.85px" width="8.6" height="8.6" viewBox="0 0 10 10"><path d="M1 10C2.5 6 6 2 9.5 1 8 5 5 8.5 1 10z" fill="#4d6d92"/></svg>
<div class="t" style="left:60.50px;top:121.23px;font-size:10.3px;line-height:1;color:#31363b;font-weight:normal;transform:scaleX(0.9932);transform-origin:0 0;">SpatiaLite</div>
<svg class="a" style="left:39px;top:138.78px" width="4" height="6" viewBox="0 0 4 6"><path d="M0.8 0.8L3 3 0.8 5.2" fill="none" stroke="#a0a2a4" stroke-width="0.8"/></svg>
<div class="a" style="left:43.7px;top:141.78px;width:5px;height:1px;background:#dcdddf"></div>
<svg class="a" style="left:49.2px;top:137.48px" width="8.6" height="8.6" viewBox="0 0 10 10"><path d="M0.5 1.5h9v4l-2.5 2v2H4.5V7.5L0.5 5.5z" fill="#466f9e"/></svg>
<div class="t" style="left:60.50px;top:137.86px;font-size:10.3px;line-height:1;color:#31363b;font-weight:normal;transform:scaleX(0.9493);transform-origin:0 0;">PostGIS</div>
<svg class="a" style="left:39px;top:155.41px" width="4" height="6" viewBox="0 0 4 6"><path d="M0.8 0.8L3 3 0.8 5.2" fill="none" stroke="#a0a2a4" stroke-width="0.8"/></svg>
<div class="a" style="left:43.7px;top:158.41px;width:5px;height:1px;background:#dcdddf"></div>
<svg class="a" style="left:49.2px;top:154.11px" width="8.6" height="8.6" viewBox="0 0 10 10"><path d="M0.5 1l9 3.5-5 1.5-3 3.5z" fill="#3d5f8e"/></svg>
<div class="t" style="left:60.50px;top:154.49px;font-size:10.3px;line-height:1;color:#31363b;font-weight:normal;transform:scaleX(0.9012);transform-origin:0 0;">MSSQL</div>
<div class="a" style="left:43.7px;top:175.04px;width:5px;height:1px;background:#dcdddf"></div>
<svg class="a" style="left:49.2px;top:170.74px" width="8.6" height="8.6" viewBox="0 0 10 10"><rect x="0.5" y="1.5" width="9" height="7" rx="1.5" fill="#5d8fcb"/></svg>
<div class="t" style="left:60.50px;top:171.12px;font-size:10.3px;line-height:1;color:#31363b;font-weight:normal;transform:scaleX(0.9585);transform-origin:0 0;">DB2</div>
<svg class="a" style="left:39px;top:188.67px" width="4" height="6" viewBox="0 0 4 6"><path d="M0.8 0.8L3 3 0.8 5.2" fill="none" stroke="#a0a2a4" stroke-width="0.8"/></svg>
<div class="a" style="left:43.7px;top:191.67px;width:5px;height:1px;background:#dcdddf"></div>
<svg class="a" style="left:49.2px;top:187.37px" width="8.6" height="8.6" viewBox="0 0 10 10"><circle cx="5" cy="5" r="4.5" fill="#4b72a0"/><path d="M1.5 4.5c2-1 4 0 7-1M2.5 7.5c2-1 3.5 0 5-1" stroke="#e8eef5" stroke-width="0.7" fill="none"/></svg>
<div class="t" style="left:60.50px;top:187.75px;font-size:10.3px;line-height:1;color:#31363b;font-weight:normal;transform:scaleX(0.9566);transform-origin:0 0;">WMS/WMTS</div>
<svg class="a" style="left:39px;top:205.3px" width="4" height="6" viewBox="0 0 4 6"><path d="M0.8 0.8L3 3 0.8 5.2" fill="none" stroke="#a0a2a4" stroke-width="0.8"/></svg>
<div class="a" style="left:43.7px;top:208.30px;width:5px;height:1px;background:#dcdddf"></div>
<svg class="a" style="left:49.2px;top:204px" width="8.6" height="8.6" viewBox="0 0 10 10"><circle cx="5" cy="5" r="4.5" fill="#4b72a0"/><path d="M1.5 4.5c2-1 4 0 7-1M2.5 7.5c2-1 3.5 0 5-1" stroke="#e8eef5" stroke-width="0.7" fill="none"/></svg>
<div class="t" style="left:60.50px;top:204.38px;font-size:10.3px;line-height:1;color:#31363b;font-weight:normal;transform:scaleX(0.9328);transform-origin:0 0;">XYZ Tiles</div>
<svg class="a" style="left:39px;top:221.93px" width="4" height="6" viewBox="0 0 4 6"><path d="M0.8 0.8L3 3 0.8 5.2" fill="none" stroke="#a0a2a4" stroke-width="0.8"/></svg>
<div class="a" style="left:43.7px;top:224.93px;width:5px;height:1px;background:#dcdddf"></div>
<svg class="a" style="left:49.2px;top:220.63px" width="8.6" height="8.6" viewBox="0 0 10 10"><circle cx="5" cy="5" r="4.5" fill="#4b72a0"/><path d="M1.5 4.5c2-1 4 0 7-1M2.5 7.5c2-1 3.5 0 5-1" stroke="#e8eef5" stroke-width="0.7" fill="none"/></svg>
<div class="t" style="left:60.50px;top:221.01px;font-size:10.3px;line-height:1;color:#31363b;font-weight:normal;transform:scaleX(0.8697);transform-origin:0 0;">WCS</div>
<svg class="a" style="left:39px;top:238.56px" width="4" height="6" viewBox="0 0 4 6"><path d="M0.8 0.8L3 3 0.8 5.2" fill="none" stroke="#a0a2a4" stroke-width="0.8"/></svg>
<div class="a" style="left:43.7px;top:241.56px;width:5px;height:1px;background:#dcdddf"></div>
<svg class="a" style="left:49.2px;top:237.26px" width="8.6" height="8.6" viewBox="0 0 10 10"><circle cx="5" cy="5" r="4.3" fill="#dfe8f2" stroke="#9db5d0" stroke-width="0.8"/></svg>
<div class="t" style="left:60.50px;top:237.64px;font-size:10.3px;line-height:1;color:#31363b;font-weight:normal;transform:scaleX(0.9021);transform-origin:0 0;">OWS</div>
<svg class="a" style="left:39px;top:255.19px" width="4" height="6" viewBox="0 0 4 6"><path d="M0.8 0.8L3 3 0.8 5.2" fill="none" stroke="#a0a2a4" stroke-width="0.8"/></svg>
<div class="a" style="left:43.7px;top:258.19px;width:5px;height:1px;background:#dcdddf"></div>
<svg class="a" style="left:49.2px;top:253.89px" width="8.6" height="8.6" viewBox="0 0 10 10"><circle cx="5" cy="5" r="4.5" fill="#4b72a0"/><path d="M1.5 4.5c2-1 4 0 7-1M2.5 7.5c2-1 3.5 0 5-1" stroke="#e8eef5" stroke-width="0.7" fill="none"/></svg>
<div class="t" style="left:60.50px;top:254.27px;font-size:10.3px;line-height:1;color:#31363b;font-weight:normal;transform:scaleX(0.9858);transform-origin:0 0;">ArcGisMapServer</div>
<svg class="a" style="left:39px;top:271.82px" width="4" height="6" viewBox="0 0 4 6"><path d="M0.8 0.8L3 3 0.8 5.2" fill="none" stroke="#a0a2a4" stroke-width="0.8"/></svg>
<div class="a" style="left:43.7px;top:274.82px;width:5px;height:1px;background:#dcdddf"></div>
<svg class="a" style="left:49.2px;top:270.52px" width="8.6" height="8.6" viewBox="0 0 10 10"><circle cx="5" cy="5" r="4.5" fill="#4b72a0"/><path d="M1.5 4.5c2-1 4 0 7-1M2.5 7.5c2-1 3.5 0 5-1" stroke="#e8eef5" stroke-width="0.7" fill="none"/></svg>
<div class="t" style="left:60.50px;top:270.90px;font-size:10.3px;line-height:1;color:#31363b;font-weight:normal;transform:scaleX(0.9833);transform-origin:0 0;">ArcGisFeatureServer</div>
<div class="a" style="left:43.7px;top:291.45px;width:5px;height:1px;background:#dcdddf"></div>
<svg class="a" style="left:49.2px;top:287.15px" width="8.6" height="8.6" viewBox="0 0 10 10"><path d="M5 0.5v9M1 2.8l8 4.4M9 2.8L1 7.2" stroke="#5a8fcf" stroke-width="1.5"/></svg>
<div class="t" style="left:60.50px;top:287.53px;font-size:10.3px;line-height:1;color:#31363b;font-weight:normal;transform:scaleX(1.0001);transform-origin:0 0;">GeoNode</div>
<svg class="a" style="left:39px;top:305.08px" width="4" height="6" viewBox="0 0 4 6"><path d="M0.8 0.8L3 3 0.8 5.2" fill="none" stroke="#a0a2a4" stroke-width="0.8"/></svg>
<div class="a" style="left:43.7px;top:308.08px;width:5px;height:1px;background:#dcdddf"></div>
<svg class="a" style="left:49.2px;top:303.78px" width="8.6" height="8.6" viewBox="0 0 10 10"><path d="M5 0.5l4.3 2.3v4.6L5 9.5 0.7 7.4V2.8z" fill="#f08c2a"/></svg>
<div class="t" style="left:60.50px;top:304.16px;font-size:10.3px;line-height:1;color:#31363b;font-weight:normal;transform:scaleX(1.0608);transform-origin:0 0;">Mergin</div>
<svg class="a" style="left:39px;top:321.71px" width="4" height="6" viewBox="0 0 4 6"><path d="M0.8 0.8L3 3 0.8 5.2" fill="none" stroke="#a0a2a4" stroke-width="0.8"/></svg>
<div class="a" style="left:43.7px;top:324.71px;width:5px;height:1px;background:#dcdddf"></div>
<svg class="a" style="left:49.2px;top:320.41px" width="8.6" height="8.6" viewBox="0 0 10 10"><circle cx="5" cy="5" r="4.3" fill="#e4ecf4" stroke="#6d8fb8" stroke-width="0.9"/><path d="M3 3l2 4 2-4" fill="none" stroke="#6d8fb8" stroke-width="0.9"/></svg>
<div class="t" style="left:60.50px;top:320.79px;font-size:10.3px;line-height:1;color:#31363b;font-weight:normal;transform:scaleX(0.9499);transform-origin:0 0;">WFS / OGC API - Features</div>
<div class="a" style="left:37px;top:348.5px;width:66px;height:2px;background:#3daee9;border-radius:1px"></div>
<div class="a" style="left:222px;top:336px;width:2px;height:8px;background:#3daee9"></div>
<div class="a" style="left:33px;top:355px;width:195px;height:1px;background:#e2e3e5"></div>
<div class="t" style="left:35.20px;top:358.98px;font-size:10.3px;line-height:1;color:#31363b;font-weight:normal;transform:scaleX(0.9642);transform-origin:0 0;">Layers</div>
<svg class="a" style="left:206px;top:358px" width="8" height="8" viewBox="0 0 8 8"><path d="M4 1L7 4 4 7 1 4z" fill="none" stroke="#8a8c8e" stroke-width="0.8"/></svg>
<svg class="a" style="left:216px;top:357px" width="10" height="10" viewBox="0 0 10 10"><circle cx="5" cy="5" r="4.6" fill="#7d7f81"/><path d="M3 3l4 4M7 3L3 7" stroke="#e6e7e8" stroke-width="1.1"/></svg>
<svg class="a" style="left:35px;top:372px" width="11" height="11" viewBox="0 0 11 11"><path d="M0.5 8l5-4 2 2-5 4z" fill="#e8503e"/><path d="M5.5 4l4-3 1 2-3 3z" fill="#f2c400"/></svg>
<svg class="a" style="left:48.5px;top:372px" width="11" height="11" viewBox="0 0 11 11"><path d="M2 10V3l3-2.5L8 3v7z" fill="none" stroke="#8a8c8e" stroke-width="0.9"/><path d="M4 5h3M4 7h3" stroke="#8a8c8e" stroke-width="0.8"/></svg>
<svg class="a" style="left:62px;top:372px" width="11" height="11" viewBox="0 0 11 11"><ellipse cx="5.5" cy="5.5" rx="4.8" ry="2.8" fill="#dfe7ef" stroke="#8aa0b8" stroke-width="0.7"/><circle cx="5.5" cy="5.5" r="1.7" fill="#3a5f8a"/></svg>
<svg class="a" style="left:75.5px;top:372px" width="11" height="11" viewBox="0 0 11 11"><path d="M0.5 1h10L7 5.5V10H4V5.5z" fill="#3d8ab8"/><rect x="0.5" y="0.5" width="10" height="1.5" fill="#d8c050"/></svg>
<svg class="a" style="left:89px;top:372px" width="11" height="11" viewBox="0 0 11 11"><path d="M1 1h3v3H1zM6 6h3v3H6z" fill="none" stroke="#cfd0d2" stroke-width="0.9"/></svg>
<svg class="a" style="left:101.5px;top:375.5px" width="6" height="4" viewBox="0 0 6 4"><path d="M0.5 0.8L3 3.2L5.5 0.8" fill="none" stroke="#c0c2c4" stroke-width="0.9"/></svg>
<svg class="a" style="left:109.5px;top:372px" width="11" height="11" viewBox="0 0 11 11"><rect x="0.5" y="2" width="6" height="7.5" fill="#f1d27a"/><path d="M7.5 10.5L4 7h2V1h3v6h2z" fill="#2f6fb8"/></svg>
<svg class="a" style="left:123px;top:372px" width="11" height="11" viewBox="0 0 11 11"><rect x="0.5" y="2" width="6" height="7.5" fill="#f1d27a"/><path d="M7.5 0.5L11 4H9v6H6V4H4z" fill="#2f6fb8"/></svg>
<svg class="a" style="left:136px;top:372px" width="11" height="11" viewBox="0 0 11 11"><rect x="1" y="1" width="7" height="8" fill="#fff" stroke="#888" stroke-width="0.9"/><circle cx="8.5" cy="8.5" r="2.2" fill="#e2453a"/></svg>
<div class="a" style="left:33.5px;top:385px;width:194px;height:228px;background:#fcfcfc;border:1px solid #dcdde0"></div>
<div class="a" style="left:49px;top:385.5px;width:176px;height:16px;background:#c4e0f4"></div>
<div class="a" style="left:41px;top:386px;width:1px;height:7px;background:#d0d1d2"></div><div class="a" style="left:41px;top:393px;width:8px;height:1px;background:#d0d1d2"></div>
<div class="a" style="left:51px;top:391.5px;width:5.5px;height:5.5px;background:#3daee9"></div>
<div class="t" style="left:60.00px;top:389.23px;font-size:10.6px;line-height:1;color:#232629;font-weight:bold;transform:scaleX(0.9012);transform-origin:0 0;">Vector Tiles Test</div>
<div class="a" style="left:60px;top:398.6px;width:75px;height:1px;background:#3b4550"></div>
<div class="a" style="left:228px;top:86px;width:965px;height:528px;border:1px solid #dde5f6"></div>
<svg class="a" style="left:229px;top:87px" width="963" height="526" viewBox="229 87 963 526"><rect x="229" y="87" width="963" height="526" fill="#fff"/>
<path d="M225,83 548.7,83 548,92.3 548.7,100.3 552,103.7 560,97.7 564,93.7 558.7,100.3 560,107 563.3,107.7 558.7,109 554.7,109.7 553.3,115 558.7,120.3 566.7,124.3 570.7,128.3 578.7,128.3 586.7,125.7 594.7,119 602.7,108.3 610.7,101.7 613.3,93.7 614.7,83 617.5,83 617,95 619,101 621.3,104.3 624,120.3 629.3,136.3 634.7,147 640,160.3 642.7,173.3 644,185.3 656,185.3 660,177.3 665.3,170.7 676,169.3 681.3,164 683,159 687,145 687,129 688,117 695,111 709,97 715,83 824,83 821,91 799,92 779,93 769,101 770,117 777,127 780,122 781,133 778,145 775,151 767,147 761,139 753,137 747,145 741,155 740,167 740,183 738.7,190.7 730.7,197.3 726.7,201.3 718.7,208 712,205.3 708,198.7 700,198.7 686.7,205.3 673.3,212 660,216 653.3,213.3 649.3,212 644,208 638.7,206.7 630.7,212 622.7,216 617.3,213.3 618.7,209.3 612,206.7 606,199 602,191 604.6,180 611,176 618,167 616.5,162 610,154 611,138 606,142 595,148.5 586,156.5 585,172 587.4,193.6 592.7,206.8 591.4,214.8 590,221.4 579.5,221.4 571.5,222.7 566,223.3 553,230.6 546,236 543.7,246.5 534.4,259.8 521.2,270.4 516,275.7 507,283 505.3,288 502.7,293.3 492,298.7 489.3,302.7 492.7,304 486.7,305.3 476,304 473.3,300 466.7,299.3 468,306.7 469.3,314.7 470.7,318 464,318.7 457.3,320 448,314.7 440,317.3 432,320 430.7,324 436,324 432,326.7 434.7,332 446.7,336 457.3,340 465.3,344 462.7,346.7 465.3,352 470.7,358.7 474.7,365 475,375 473,385 471,399 469,407 466,409 449,407 437,407 419,405 401,404 395,403 389,406 378,411 377,417 380,425 382,434 383,445 382.3,453 378.5,468 374.8,478 376,485.4 381,488 378.5,493 379.8,507.8 383.5,509 398.5,506.6 408.4,507.8 413.4,512.8 419.7,522.8 425.9,517.8 435.9,512.8 453.3,512.8 460.8,511.6 469,502.8 479,495.4 484,485.4 489,483 485.2,475.4 486.4,463 494,453 499,447 509,445 521,437 526,429 524,421 525,413 537,406 549,409 565,413 577,403 589,399 601,393 609,401 613,411 621,421 631,431 643,441 651,447 657.3,450.7 662.7,452 668,457.3 674.7,464 678.7,470.7 681.3,476 677.3,482.7 674.7,486.7 674.7,494.7 678.7,493.3 680,489.3 684,482.7 692,478.7 693.3,474.7 690.7,470.7 685.3,466.7 686.7,461.3 690.7,457.3 696,456 701.3,460 705.3,465.3 708.7,464 708,460 704,456 696,450.7 688,444 680,437.3 678.7,433.3 666.7,428 656,420 649,405 639,391 637,387 634,379 637,373 649,370 653,378 657,375 662,379 665,387 671,393 673,397 683,407 693,415 704,420 714.7,428 720,436 721.3,442.7 719.7,448.1 719.7,457.5 722.8,465.3 729,471.5 733.7,476.2 739.9,479.3 735.3,482.4 732.9,485.5 738.4,487.1 744.6,490.2 754,488.6 764.9,491.8 766.4,493.3 755.5,491.8 746.2,491.8 741.5,494.9 743.1,499.5 746.2,504.2 749.3,508.9 755.5,513.6 758.6,516.7 761.7,513.6 761.7,508.9 764.9,505.8 766.4,501.1 768,498 770.3,496.4 774.2,496.4 775.8,493.3 772.7,490.2 766.4,485.5 763.3,482.4 761.7,479.3 763.3,476.2 761.7,473.1 758.6,468.4 758.6,460.6 760.2,455.9 764.9,454.4 771.1,457.5 774.2,454.4 777.3,449.7 782,449.7 792.9,448.9 800.7,448.1 805.4,451.2 807.3,453.3 814,449.3 823.3,446.7 830,446.7 834,445.3 834,445.3 831.3,442.7 824.7,437.3 823.3,430.7 818,424 819.3,420 821,417 829,407 831,401 833,385 837,381 843,373 849,363 857,355 864.7,353.6 869.4,352.8 877.9,355.1 870.1,357.5 872.5,360.6 877.1,363.3 885.7,361.8 889.6,363.7 891.2,361 889.6,365.3 883.4,370 877.1,374.6 878.7,376.2 887.3,378.5 889.6,382.4 889.6,386.3 892.7,391.8 895.9,391.8 902.9,385.5 908.3,384 914.6,380.1 920,380.9 925,381 929,381 925,377 920,374.6 913,376.2 905.2,367.6 906,360.6 909.7,357.8 919.1,355 934,347.5 950.8,342.8 958.3,343.7 949,351.2 943.4,356.8 949,364.3 941.5,368 937.8,375.5 928.4,377.4 926.5,379.3 939.6,386.7 950.8,392.3 962.1,401.7 973.3,411 982.6,418.5 986.4,427.9 986.4,435.3 978.9,442.8 965.8,446.5 950.8,447.5 937.8,446.5 924.7,441.9 917.2,437.2 909.7,431.6 900.4,431.6 885.4,433.5 872.3,435.3 863,441 853.6,444.7 842.4,445.6 836.7,446 834,446.7 839.3,450.7 844.7,452 835.3,453.3 832.7,456 823.3,456 818,458.7 812.7,456 807.3,453.5 802,460 800.7,462.7 800.7,466.8 808.5,473.1 810.1,482.4 807,487.1 811.6,491.8 814.7,499.5 816.3,507.3 824.1,508.9 831.9,512 843.6,519 856,512.8 866,511.6 878.5,516.6 893.4,520.3 903.4,515.3 913.4,512.8 920.8,511.6 918.4,517.8 920.8,525.3 918.4,535.2 917.1,547.7 913.4,560.2 908.4,575.1 903.4,585.1 898.4,591.3 890,593 878,595 870,590 858,589 846,593 836,598 822,594 810,590 788,587 773.8,580.1 758.8,572.6 748.9,568.9 739,570 727.7,575.1 726.4,590 719,600 709,602.5 700.8,597.6 683.3,592.6 673.4,585 670.9,577.6 658.4,572.6 643.5,568.9 626,565.1 613.5,557.7 611,547.7 618.5,537.7 618.5,527.8 613.5,520.3 618.5,512.8 618.5,509 608.6,509 603.6,504 588.6,509 573.7,510.3 563.7,507.8 548.7,514 533.8,510.3 518.8,512.8 498.9,517.8 486.4,525.3 476.5,527.8 469,532.8 453.3,535 443.3,532.8 428.4,530.3 423.4,525.3 415.9,527.8 413.4,535.2 408.4,547.7 398.5,557.7 383.5,567.6 376,575 371,587.6 368.6,600 369.8,617 225,617Z" fill="#9b9cff" stroke="#1c1c2c" stroke-width="0.9" stroke-linejoin="round"/>
<path d="M1072,357 1082,353 1096,347 1108,347 1116,349 1124,350 1125,357 1122,369 1124,376 1116,375 1104,381 1100,387 1104,390 1092,391 1092,395 1100,405 1110,415 1117.2,419 1118.2,425.1 1116.7,434.2 1121.3,430.2 1125.3,429.2 1131.4,429.2 1134.4,435.2 1136.4,439.3 1140.5,443.3 1143,447.4 1139.5,449.9 1138.5,451.4 1133.4,453 1130.4,450.4 1124.3,449.9 1121.8,447.4 1120.2,453.5 1119.7,460.5 1121.3,464.6 1127.3,464.6 1128.8,469.7 1124.3,471.7 1124.3,475.7 1130.4,476.7 1132.4,480 1133.5,485.4 1133.5,500.4 1134.7,511.6 1123.5,512.8 1108.5,514 1093.6,510.3 1086.1,505.3 1076.1,497.9 1073.6,488 1073.6,478 1077.2,472.3 1079.7,462.3 1083.4,452.4 1078.5,447.4 1074.7,441.1 1071,433.7 1066,425 1056,411 1056,403 1052,395 1048,389 1052,383 1056,371 1064,365Z M636,119 637.3,108.3 645.3,100.3 652,98.3 656,101.7 653.3,108.3 648,113.7 640,117.7Z M657.3,132.3 661.3,119 666.7,111 665.3,117.7 660,131Z M680,95 690,94 700,97 707,99 700,100.5 688,99Z M673,100 683,100.5 682,102 674,102Z M811,107 818,105 822,115 825,127 825,133 820,130 815,118Z M938,103 947,102 943,107 949,113 955,120 953,127 948,129 943,122 933,113 937,112 940,107Z M861,119 867,122 866,126 858,125Z M957,85 960,90 965,93 964,95 958,91Z M870,302 879,303 881,305 885,310 882,310 873,305Z M573,364 578,362 583,362.5 580,365 575,366Z M996.4,484.2 1008.8,479.2 1005.1,485.4 1001.3,489.1 996.4,486.6Z M1027.5,490.4 1032.5,491.6 1036.2,500.4 1035,506.6 1031.3,505.3 1028.8,497.9Z M1028,454.9 1031.1,454.9 1034.8,459.9 1032.3,461.1 1029.2,458.6Z M996,408 998,408.5 1012.5,417.5 1012,419 997,410Z M884.7,478 887,477.3 891.3,484 889,486 886,484Z M1003.8,549 1006,550 1008.8,557.7 1005,556Z M1007.6,566.4 1010,567 1012.6,575.1 1009,574Z M1061,617 1068,606 1073.6,602.5 1078.6,605 1088.6,617Z M1048.7,597.6 1056.2,598 1055,600.5 1049,600Z M1187,381 1196,370 1196,392 1187,391Z M1172,429 1178,427 1180,434 1174,437Z M548.5,236.5 553,237 552,246 548,244Z M588,150 600,152 604,158 598,156 590,155Z M799,121 801,121 801,126 799,125Z" fill="#9b9cff" stroke="#1c1c2c" stroke-width="0.9" stroke-linejoin="round"/>
<path d="M426.9,117.9 435.5,116.3 449.5,115.6 450.3,120.2 444.8,126.5 440.1,132.7 439.4,137.4 446.4,136.6 457.3,136.6 465,138.9 465.8,143.6 461.9,151.4 457.3,159.1 451,163.8 447.9,165.4 454.1,166.9 455.7,170 449.5,171.6 444.8,172.4 451,174.7 460.4,177.8 465,184 468.2,190.3 471.3,196.5 473,201 485,209 487,215 485,221 491,229 489,237 497,236 507,241 508,251 503,259 497,261 504,269 501,275 489,279 479,279 469,281 461,281 453.3,280 448,282.7 444,286.7 436,284 428,285.3 420,289.3 421,292 429,281 439,273 451,269 458,261 447,264 435,263 426,259 437,250 441,241 435,233 443,229 451,228 449,221 453,215 451,215 449,207 443,203 444,196 435,198 429.2,193.4 430.8,187.2 427.7,180.9 426.1,173.2 422.2,179.4 419.1,185.6 420.7,179.4 422.2,173.2 418.3,168.5 419.9,162.3 414.5,159.1 416.8,157.6 418.3,151.4 419.9,145.1 419.1,137.4 420.7,131.1 423.8,124.9Z M384,201 389,193 397,189 401,188 404,191 415,193 420,200 421,207 417,205 413,211 413,223 415,235 411,251 399,253 381,263 371,265 364,259 365,251 371,241 367,231 369,225 365,211 367,211 375,209 388,205Z M412.1,118.7 413.7,123.3 407.5,131.1 403.6,133.5 402.8,128 407.5,123.3Z M409.8,137.4 413.7,140.5 418.3,146.7 416.8,149.8 412.1,146.7 407.5,142Z M412.1,161.5 417,160.7 418.3,164 413.5,165.4Z M410.6,175 415,173.2 418.3,179 413,180.9Z M446.4,106 451,103.1 454.9,108 450,111.7Z M420.5,181 424,179.4 426.1,184 422,187.2Z M398.9,143.6 400.4,143.6 400.4,148.2 398.9,148.2Z M398,137.8 402,137.4 401.5,139.7 398.5,139.5Z M452,99.5 455,98 458,100 455,102Z M431,208 435,206 435,213 431,215Z M432,229 438,228 438,232 433,233Z M620,177.3 626.7,174.7 636,172 640,180 633.3,189.3 630.7,197.3 628,194.7 622.7,186.7 620,181.3Z M606,185.3 610.7,182 615.3,184 617.3,192 612,193.3 606.7,189.3Z M620,197.3 628,198 627,201.3 621,201Z M645.3,203.7 650,202.7 652,208 648,210.7Z M664,189.5 668,188.7 669.3,193 665,194Z M705,141 709,133 718,130 713,137 709,151 706,153Z M685,167 690,148 692,145 691,153 687,166Z M749,119 765,117 767,115 774,116 764,126 752,128 751,123Z M753,107 760,106 763,111 757,113Z M591,425 599,417 601,421 600,437 597,441 593,439Z M589,446 597,446.5 603.6,453 604.8,465.5 601.1,478 591.1,478 588.6,463Z M516.4,469.2 526.3,464.2 528.8,470.4 522.6,474.2 517.6,473Z M533.8,463.5 540,463 539.5,465.5 534,466Z M502.6,478.5 507.6,478 507,480.4 503,480.5Z M636,494 643.5,490.4 658.4,492.9 673.4,490.4 668.4,502.8 668.4,512.8 658.4,507.8 646,502.8 638.5,499Z M769.5,530.7 777.3,532.3 786.7,533.8 796,534.6 802.3,535.4 801.5,538.5 789.8,539.3 780.5,536.9 771.1,534.6Z M874.7,539 883.5,534 893.4,532.8 900.9,529 893.4,536.5 885.9,542.7 877.2,542.7Z M821,521 824.5,518 825.6,520 822,524.5Z M797.6,475 803,473 805.4,477 800,479.3Z M797.6,487 800.5,485.5 802.3,490 799,491.8Z M761.7,480.8 769.5,484 777.3,488.6 780.5,493.3 777.3,491.8 768,487.1Z M723.6,469 726,468.4 727.5,472.3 724.5,471.5Z M732,488 735,487 736.8,491.8 733,491Z M780,451 783,450.5 783.5,453 780.5,453Z M778,500 780,501 779,503Z M787,502 790,503 788,505Z M781,507 784,508 782,510Z M793,510 796,511 794,513Z M808,497 812,496.5 812,499 808,499.5Z M812,509 816,508 816,510 812,511Z M280,569.5 286,569 287.6,572 281,572.6Z" fill="#fff" stroke="#1c1c2c" stroke-width="0.9" stroke-linejoin="round"/>
<path d="M398.6,190.9 395,199 390.4,204.9 393.9,209.6 403.2,208.4 409.1,211.9 412.6,215.4 414.9,214.3 M621.3,104.3 627,99 629,87 M588,194.7 596,197.3 604,198.7 M657.3,216 660,221.3 660,232 657.3,238.7 661.3,245 663,249 665,261 667,275 M573,223 571,235 569,245 565,251 559,257 557,271 559.3,272.7 M518.5,273 534.4,267.7 553,267.7 557,270 556.7,276.7 M518,272.7 519.3,276.7 526,280.7 531.3,286 538,290 538,294 544.7,291.3 546,296.7 554,302 558,302 562,302 M556.7,276.7 559.3,279.3 560.7,282 563.3,287.3 559.3,291.3 558,295.3 558,300.7 562,302 564.7,299.3 563.3,294 560.7,291.3 M562,302 566,306 572.7,308.7 579.3,310 584,311.7 581.7,319.9 578.2,335.1 M578.2,336.2 589.9,334.5 602.7,337.4 609.7,339.7 612.1,337.4 616.7,337.4 622.6,339.7 633.1,335.1 640.1,333.9 642.5,337.4 640.1,328 647.1,322.2 651.8,319.9 655.3,318.7 663.5,318.7 667,312.9 686.9,315.2 690.4,317.5 691.5,323.4 688,325.7 M609.7,339.7 610.9,349.1 608.6,354.9 607.4,360.8 599.2,357.3 594.5,365.4 588.7,358.4 581.7,363.1 574.7,365.4 570,367.8 M578.2,335.1 571.3,339.3 570,344.7 563.3,351.3 560.7,355 561,357 569,360 571,367 569,373 567,381 571,393 577,399 M610.9,349.1 619.1,349.1 633.1,346.7 637.8,352.6 651.8,356.1 663.5,357.3 675.2,353.8 682.2,349.1 684.5,342.1 686.9,335.1 691.5,331.6 M586.4,329.2 599.2,324.5 616.7,317.5 630.8,311.7 640.1,315.2 651.8,319.9 661.2,323.4 669.3,325.1 681,322.2 688,325.7 692.7,330.4 704.4,333.9 710,332.7 M632.7,287.3 636.7,296.7 637.8,300 640.1,305.8 651.8,315.2 653,318.7 M632.7,287.3 643.3,283.3 656.7,276.7 660.7,274 666,275.3 667,275 683,283 687,291 691,285 701,289 711,301 719,303 M691.5,315.2 698.6,311.7 705.6,305.8 710,302.3 719,303 M719,303 729,307 741,305 759,309 M759,309 761,297 775,281 771,265 769,257 767,249 773,241 771,225 767,209 761,207 725,207 M771,263 781,257 799,259 819,263 829,263 837,263 853,267 855,259 865,253 877,249 891,248 899,259 898,269 909,273 913,285 925,287 937,286 945,293 959,299 967,301 964,315 966,325 961,333 947,337 945,345 M740,169 749,164 761,165 787,167 805,179 821,173 826,167 819,153 823,137 821,127 815,107 817,97 824,87 M779,131 791,129 805,137 817,139 823,137 M739,189 761,197 765,211 767,209 M805,179 807,191 799,207 793,213 789,213 769,215 767,209 M821,173 829,172 837,174 841,179 849,177 857,183 857,191 859,203 869,215 869,217 877,223 878,229 871,233 863,233 863,241 866,253 M1052,333 1046,319 1050,307 1050,297 1058,286 1068,296 1072,293 1071,282 1080,274 1090,269 1096,261 1102,263 1104,265 1112,261 1118,265 1126,265 1138,275 1141,283 1142,275 1154,282 1164,274 1174,275 1181,273 1192,277 M1052,333 1056,333 1066,337 1074,351 1072,357 M1158,443 1158,383 1192,371 M1116.2,435.2 1124.3,428.2 1136.4,426.1 1144.5,431.2 1149.6,439.3 1156,443 1172,441 1184,421 1192,419 M1134.7,504 1145.9,497.9 1158.4,493 1173.3,490.4 1185.8,494.2 1192,495.4 M682.1,351.9 684.4,346 684.4,336.7 691.4,332 690.3,325 M691.4,328.5 703.1,333.2 712.5,332 724.1,326.2 745,329 753,321 759,309 M753,321 756.9,325 761.7,329.1 785.7,332.6 806.3,324 816.6,341.1 820,358.3 823.4,375.4 830.3,378.8 837.1,378.8 844,382.3 M806.3,324 816.6,324 830.3,330.8 837.1,341.1 840.6,351.4 847.4,358.3 837.1,365.1 830.3,375.4 M762.7,329.7 752.2,336.7 745.2,350.7 740.5,358.9 731.2,363.6 714.8,365.9 705.4,369.4 696.1,364.7 684.4,355.4 682.1,351.9 M712.5,332 713.6,345 712.5,365.9 M650.6,356.1 649.5,361.9 650.6,370.1 654.1,372.5 670.5,370.1 675.2,361.9 682.2,357.3 686.9,354.9 M731.2,363.6 737,371.7 742.8,378.8 745.2,384.6 754.5,388.1 759.2,390.4 761.5,397.5 770.1,402 793.5,403.2 802.8,398.5 814.5,396.2 828.5,402 M712.5,365.9 714.8,374.1 719.5,378.8 730,379.9 735.8,384.6 745.2,384.6 M676.2,379.9 678.6,378.8 689.1,378.8 698.4,379.9 710.1,381.1 717.1,379.9 718.3,388.1 720.6,396.3 721,402 718.7,402 715.2,407.9 711.7,410.2 709.3,417.2 M676.2,379.9 677.4,386.9 682.1,392.8 685.6,399.8 693,406 700,412 704,418 M756,395 755,404.3 760.8,411.4 756.1,421.9 758.4,426.6 763.1,433.6 763.1,441.7 770.1,440.6 779.5,438.8 786.5,441.7 793.5,442.9 800.5,441.7 801.7,435.9 809.9,431.2 816.9,432.4 822.7,431.2 M802.8,437.1 806.3,441.7 802.8,446.4 801.7,451.1 M733.9,412.5 740.9,416 746.7,420.7 744.4,427.7 754.9,425.4 761.9,432.4 763.1,441.7 759.6,444.1 749.1,446.4 739.7,447.6 735.1,446.4 733.9,439.4 733.9,432.4 729.2,430.1 M733.9,412.5 728,419.5 729.2,428.9 736.2,428.9 744.4,427.7 M718.7,425.4 723.4,423 728,424.2 733.9,432.4 735.1,446.4 738.6,453.4 732.7,464 726.9,467.5 M709.3,417.2 711.7,410.2 716.4,406.7 723.4,412.5 728,419.5 718.7,425.4 M723.4,412.5 733.9,412.5 738.6,411.4 747.9,420.7 M721,395 718.7,402 M466,409 471,413 485,419 497,418 509,423 525,425 M383,431 389,429 399,434 409,433 413,439 407,447 405,453 406,453 403.5,463 398.5,468 402.2,478 403.5,493 398.5,503 407.2,506.6 M460.8,537.7 465.8,545 468,562.6 474,575.1 469,580 460.8,581.3 443.3,587.6 440.8,595 425.9,605 413.4,613 M591.1,509 586.1,517.8 588.6,532.8 578.7,552.7 586.1,565.1 596.1,577.6 601.1,602.5 599.8,613 M624.8,566.4 624.8,575.1 611,585 608.6,602.5 601.1,605 M788,587 784,600 783.8,613 M858.5,588.8 861,613 M898.4,591.3 900.9,602.5 905.9,613 M920.8,535.2 925.8,547.7 920.8,557.7 915.9,567.6 910.9,580.1 M913.4,570 913.4,592.6 908.4,602.5 908.4,613 M918.4,570 945.8,562.6 949,562.6 981.4,547.7 981.4,535.2 981.4,517.8 993.9,505.3 M930.8,587.6 948.3,582.6 954,577.6 951.5,562.6 M933.3,592.6 940.8,602.5 M956.5,580.1 973.9,582.6 993.9,592.6 1011.3,610 1013.8,613 M920.8,517.8 928.3,512.8 943.3,511.6 968.9,509 991.4,505.3 1001.3,502.8 1016.3,505.3 1023.8,510.3 M1023.8,510.3 1031.3,520.3 1041.2,527.8 1036.2,537.7 1031.3,552.7 1038.7,567.6 1053.7,577.6 1058.7,587.6 1063.6,602.5 1068.6,610 M1023.8,510.3 1021.3,502.8 1016.3,488 1013.8,473 1012.4,462.3 1009.9,454.9 1009.9,447.4 1007.4,443.6 999.9,438.7 986.2,439.9 M967.5,406.2 976.2,407.5 985,411.2 996.2,411.8 1003.6,413.7 1012.4,418.7 1018.6,420 1026.1,420 1032.3,421.2 1034.8,427.4 1041,432.4 1047.3,433.7 1054.8,439.9 1059.8,443.6 1067.2,437.4 1069.7,434.9 M1007.4,443.6 1017.4,443.6 1026.1,442.4 1026.1,439.9 1034.8,441.1 1042.3,442.4 1046,446.1 1042.3,447.4 M1041,436.2 1042.3,443.6 M1012.4,462.3 1019.9,464.8 1024.8,469.8 1029.8,472.3 1037.3,474.8 1044.8,474.8 1047.3,479.8 M1026.1,442.4 1027.3,444.9 1033.6,449.9 1033.6,459.9 1038.6,462.3 1044.8,468.6 1044.8,474.8 M1044.8,474.8 1053.5,469.8 1063.5,468.6 1067.2,474.8 1072.2,479.8 1068.6,483 1073.6,488 M1013.8,473 1023.8,468 1036.2,473 1043.7,478 M965,325 961,333 M952,295 967,301" fill="none" stroke="#3434de" stroke-width="1.1" stroke-linejoin="round"/>
<g fill="#f20000" stroke="#a30000" stroke-width="0.7"><circle cx="704" cy="99" r="2.9"/><circle cx="661" cy="90" r="2.9"/><circle cx="616" cy="87" r="2.9"/><circle cx="611" cy="180" r="2.9"/><circle cx="638" cy="180" r="2.9"/><circle cx="703" cy="173" r="2.9"/><circle cx="784" cy="96" r="2.9"/><circle cx="791" cy="113" r="2.9"/><circle cx="776" cy="153" r="2.9"/><circle cx="784" cy="155" r="2.9"/><circle cx="772" cy="187" r="2.9"/><circle cx="790" cy="201" r="2.9"/><circle cx="938" cy="179" r="2.9"/><circle cx="1015" cy="166" r="2.9"/><circle cx="1161.6" cy="129" r="2.9"/><circle cx="1076" cy="178.4" r="2.9"/><circle cx="1158" cy="200.6" r="2.9"/><circle cx="412.6" cy="228.4" r="2.9"/><circle cx="391.6" cy="238.2" r="2.9"/><circle cx="485.8" cy="264.4" r="2.9"/><circle cx="546" cy="248" r="2.9"/><circle cx="556" cy="245.4" r="2.9"/><circle cx="539.4" cy="277" r="2.9"/><circle cx="543" cy="281.4" r="2.9"/><circle cx="561" cy="297" r="2.9"/><circle cx="515.4" cy="314.2" r="2.9"/><circle cx="436.5" cy="176.3" r="2.9"/><circle cx="447.9" cy="200.8" r="2.9"/><circle cx="607.4" cy="224.2" r="2.9"/><circle cx="648" cy="245" r="2.9"/><circle cx="612.6" cy="272.6" r="2.9"/><circle cx="591.4" cy="291.4" r="2.9"/><circle cx="660.4" cy="291.4" r="2.9"/><circle cx="673" cy="296.6" r="2.9"/><circle cx="717" cy="251" r="2.9"/><circle cx="739" cy="250.6" r="2.9"/><circle cx="818" cy="217" r="2.9"/><circle cx="819.4" cy="226.6" r="2.9"/><circle cx="720.6" cy="316.2" r="2.9"/><circle cx="626.2" cy="327" r="2.9"/><circle cx="683.6" cy="325.8" r="2.9"/><circle cx="853" cy="285" r="2.9"/><circle cx="862.6" cy="302.6" r="2.9"/><circle cx="1020.6" cy="317" r="2.9"/><circle cx="1088" cy="231.6" r="2.9"/><circle cx="510" cy="354.6" r="2.9"/><circle cx="545.6" cy="369" r="2.9"/><circle cx="561" cy="361.4" r="2.9"/><circle cx="586" cy="351" r="2.9"/><circle cx="589.7" cy="340.8" r="2.9"/><circle cx="506.4" cy="422.6" r="2.9"/><circle cx="513.6" cy="441.6" r="2.9"/><circle cx="602" cy="345" r="2.9"/><circle cx="645.6" cy="344" r="2.9"/><circle cx="715.4" cy="338.6" r="2.9"/><circle cx="721" cy="344" r="2.9"/><circle cx="783" cy="365" r="2.9"/><circle cx="597.4" cy="374" r="2.9"/><circle cx="660.6" cy="368" r="2.9"/><circle cx="679" cy="368" r="2.9"/><circle cx="691.4" cy="372.4" r="2.9"/><circle cx="732.6" cy="384.6" r="2.9"/><circle cx="698.6" cy="394" r="2.9"/><circle cx="707.8" cy="401" r="2.9"/><circle cx="733.8" cy="396.4" r="2.9"/><circle cx="800" cy="391.6" r="2.9"/><circle cx="636.4" cy="400" r="2.9"/><circle cx="721" cy="415.6" r="2.9"/><circle cx="738" cy="422" r="2.9"/><circle cx="767" cy="420" r="2.9"/><circle cx="793" cy="421.6" r="2.9"/><circle cx="639.4" cy="421" r="2.9"/><circle cx="636.6" cy="433.6" r="2.9"/><circle cx="747.6" cy="437.6" r="2.9"/><circle cx="725" cy="442" r="2.9"/><circle cx="727" cy="447.4" r="2.9"/><circle cx="658" cy="450" r="2.9"/><circle cx="762.6" cy="452" r="2.9"/><circle cx="830.6" cy="342" r="2.9"/><circle cx="833" cy="347.4" r="2.9"/><circle cx="889" cy="388.6" r="2.9"/><circle cx="895" cy="415.4" r="2.9"/><circle cx="1014.9" cy="436.8" r="2.9"/><circle cx="1024.2" cy="436.2" r="2.9"/><circle cx="834.6" cy="447" r="2.9"/><circle cx="1022.6" cy="450.6" r="2.9"/><circle cx="1093" cy="431.6" r="2.9"/><circle cx="392.7" cy="462.5" r="2.9"/><circle cx="442.8" cy="456.7" r="2.9"/><circle cx="429.6" cy="473.7" r="2.9"/><circle cx="377.5" cy="483.4" r="2.9"/><circle cx="415.4" cy="503.6" r="2.9"/><circle cx="405.2" cy="553.2" r="2.9"/><circle cx="396.5" cy="559.4" r="2.9"/><circle cx="427.1" cy="553.2" r="2.9"/><circle cx="391.7" cy="587.6" r="2.9"/><circle cx="399.5" cy="593.8" r="2.9"/><circle cx="482.7" cy="471.2" r="2.9"/><circle cx="523.8" cy="512.8" r="2.9"/><circle cx="479.5" cy="528.5" r="2.9"/><circle cx="609.3" cy="512" r="2.9"/><circle cx="647.2" cy="492.4" r="2.9"/><circle cx="660.9" cy="525.3" r="2.9"/><circle cx="600.3" cy="555.2" r="2.9"/><circle cx="645.2" cy="568.9" r="2.9"/><circle cx="531.3" cy="575.1" r="2.9"/><circle cx="750.9" cy="478.7" r="2.9"/><circle cx="772" cy="494.6" r="2.9"/><circle cx="727" cy="539" r="2.9"/><circle cx="881" cy="464.2" r="2.9"/><circle cx="905.9" cy="479.2" r="2.9"/><circle cx="887.2" cy="536" r="2.9"/><circle cx="932.5" cy="521" r="2.9"/><circle cx="912.1" cy="554.7" r="2.9"/><circle cx="917.1" cy="555.2" r="2.9"/><circle cx="922.6" cy="560.7" r="2.9"/><circle cx="904.1" cy="580.9" r="2.9"/><circle cx="909.6" cy="584.6" r="2.9"/><circle cx="905.9" cy="588.8" r="2.9"/><circle cx="918.4" cy="582.6" r="2.9"/><circle cx="728" cy="580.1" r="2.9"/><circle cx="845.6" cy="593" r="2.9"/><circle cx="861.8" cy="609.5" r="2.9"/><circle cx="930.1" cy="593.8" r="2.9"/><circle cx="1021.1" cy="460.5" r="2.9"/><circle cx="1060.4" cy="457.1" r="2.9"/><circle cx="1084.7" cy="457.4" r="2.9"/><circle cx="1187.5" cy="494.9" r="2.9"/><circle cx="1103.5" cy="528.5" r="2.9"/><circle cx="955.7" cy="544" r="2.9"/><circle cx="1018.3" cy="563.4" r="2.9"/><circle cx="1016.8" cy="567" r="2.9"/><circle cx="1106.5" cy="572.6" r="2.9"/><circle cx="1141.4" cy="572.6" r="2.9"/></g></svg><svg class="a" style="left:229px;top:87px;mix-blend-mode:multiply" width="963" height="526" viewBox="229 87 963 526"><g stroke="#de3c40" stroke-width="2.2"><line x1="487.1" y1="87" x2="487.1" y2="613"/><line x1="1026.9" y1="87" x2="1026.9" y2="613"/><line x1="229" y1="447.8" x2="1192" y2="447.8"/></g></svg>
<div class="a" style="left:9px;top:615px;width:184px;height:18px;background:#fcfcfc;border:1px solid #e3e4e6;border-radius:2px"></div>
<svg class="a" style="left:13.5px;top:617.5px" width="12" height="12" viewBox="0 0 12 12"><circle cx="5" cy="5" r="3.6" fill="none" stroke="#6a6d70" stroke-width="1.2"/><path d="M7.6 7.6l3 3" stroke="#6a6d70" stroke-width="1.3"/></svg>
<div class="t" style="left:29.00px;top:620.48px;font-size:10.3px;line-height:1;color:#9a9ea2;font-weight:normal;transform:scaleX(0.9929);transform-origin:0 0;">Type to locate (Ctrl+K)</div>
<div class="a" style="left:717.5px;top:616.25px;width:71.25px;height:15.75px;background:#fcfcfc;border-radius:2px"></div>
<div class="a" style="left:827px;top:616.25px;width:56.75px;height:15.75px;background:#fcfcfc;border-radius:2px"></div>
<div class="a" style="left:938.75px;top:616.25px;width:50px;height:15.75px;background:#fcfcfc;border-radius:2px"></div>
<div class="a" style="left:1028.75px;top:616.25px;width:48.75px;height:15.75px;background:#fcfcfc;border-radius:2px"></div>
<div class="t" style="left:676.25px;top:620.48px;font-size:10.3px;line-height:1;color:#31363b;font-weight:normal;transform:scaleX(0.7792);transform-origin:0 0;">Coordinate</div>
<div class="t" style="left:720.75px;top:620.48px;font-size:10.3px;line-height:1;color:#31363b;font-weight:normal;transform:scaleX(0.7730);transform-origin:0 0;">-1658975,6911667</div>
<svg class="a" style="left:791px;top:618px" width="11" height="12" viewBox="0 0 11 12"><circle cx="5" cy="6" r="3.6" fill="none" stroke="#333" stroke-width="1.3"/><path d="M2 2.5l6.5 7.5M8.5 2.5L2 10" stroke="#333" stroke-width="0.9"/></svg>
<div class="t" style="left:806.25px;top:620.48px;font-size:10.3px;line-height:1;color:#31363b;font-weight:normal;transform:scaleX(0.7277);transform-origin:0 0;">Scale</div>
<div class="t" style="left:828.75px;top:620.48px;font-size:10.3px;line-height:1;color:#31363b;font-weight:normal;transform:scaleX(0.7812);transform-origin:0 0;">1:26001587</div>
<svg class="a" style="left:877.5px;top:622px" width="6" height="4" viewBox="0 0 6 4"><path d="M0.5 0.8L3 3.2L5.5 0.8" fill="none" stroke="#8a8c8e" stroke-width="0.9"/></svg>
<svg class="a" style="left:888.5px;top:618px" width="9" height="11" viewBox="0 0 9 11"><rect x="1" y="5" width="7" height="5.5" fill="#5a5d60"/><path d="M2.5 5V3.5a2 2 0 0 1 4 0V5" fill="none" stroke="#5a5d60" stroke-width="1.2"/></svg>
<div class="t" style="left:901.25px;top:620.48px;font-size:10.3px;line-height:1;color:#31363b;font-weight:normal;transform:scaleX(0.8145);transform-origin:0 0;">Magnifier</div>
<div class="t" style="left:941.00px;top:620.48px;font-size:10.3px;line-height:1;color:#31363b;font-weight:normal;transform:scaleX(0.7402);transform-origin:0 0;">100%</div>
<svg class="a" style="left:982.5px;top:619px" width="5" height="10" viewBox="0 0 5 10"><path d="M0.8 3.5L2.5 1.5 4.2 3.5M0.8 6.5L2.5 8.5 4.2 6.5" fill="none" stroke="#8a8c8e" stroke-width="0.8"/></svg>
<div class="t" style="left:993.75px;top:620.48px;font-size:10.3px;line-height:1;color:#31363b;font-weight:normal;transform:scaleX(0.7951);transform-origin:0 0;">Rotation</div>
<div class="t" style="left:1030.50px;top:620.48px;font-size:10.3px;line-height:1;color:#31363b;font-weight:normal;transform:scaleX(1.0682);transform-origin:0 0;">0,0 °</div>
<svg class="a" style="left:1071.5px;top:619px" width="5" height="10" viewBox="0 0 5 10"><path d="M0.8 3.5L2.5 1.5 4.2 3.5M0.8 6.5L2.5 8.5 4.2 6.5" fill="none" stroke="#8a8c8e" stroke-width="0.8"/></svg>
<div class="a" style="left:1080.5px;top:620.5px;width:7.5px;height:7.5px;background:#3daee9;border:1px solid #c6e4f5"></div>
<div class="t" style="left:1089.50px;top:620.48px;font-size:10.3px;line-height:1;color:#31363b;font-weight:normal;transform:scaleX(0.7697);transform-origin:0 0;">Render</div>
<svg class="a" style="left:1122.5px;top:619px" width="10" height="10" viewBox="0 0 10 10"><circle cx="5" cy="5" r="4.3" fill="#7a7c7e"/><path d="M1 4h8M1 6.5h8" stroke="#cfd0d2" stroke-width="0.6"/></svg>
<div class="t" style="left:1133.75px;top:620.48px;font-size:10.3px;line-height:1;color:#31363b;font-weight:normal;transform:scaleX(0.7124);transform-origin:0 0;">EPSG:3857</div>
<svg class="a" style="left:1179.5px;top:618.5px" width="11" height="11" viewBox="0 0 11 11"><path d="M1 5a4.5 4 0 1 1 3 3.8L1.5 10l0.8-2.2A4 4 0 0 1 1 5z" fill="#5a5d60"/><path d="M3.5 5h4" stroke="#fff" stroke-width="0.9"/></svg>
</body></html>
